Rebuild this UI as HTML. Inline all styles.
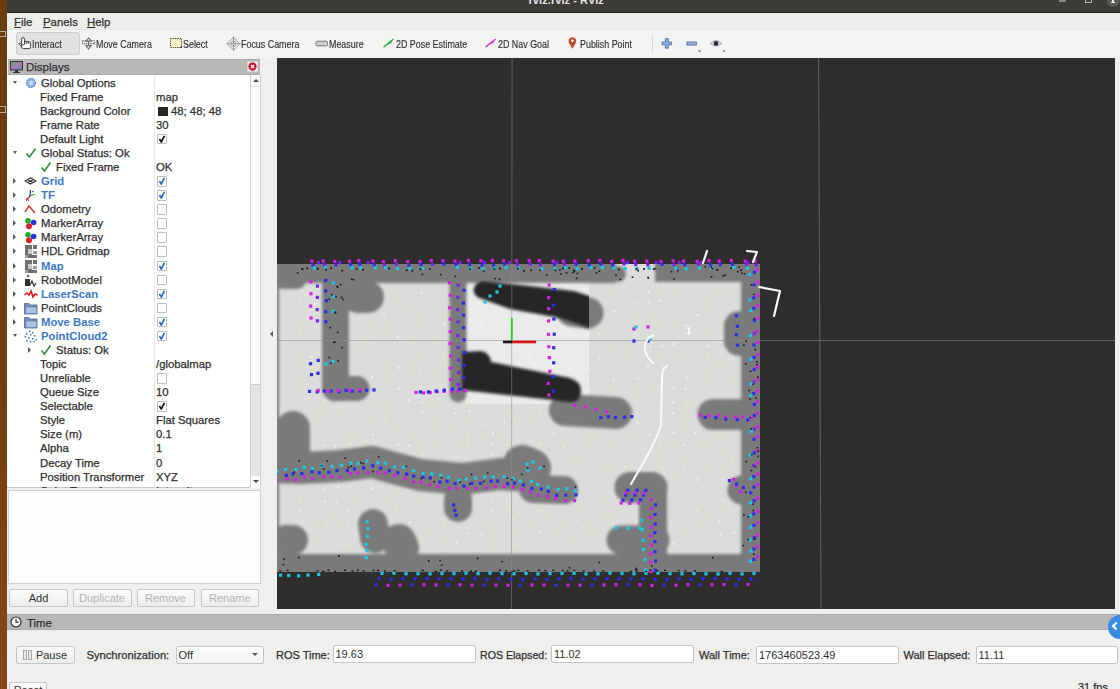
<!DOCTYPE html>
<html><head><meta charset="utf-8">
<style>
*{margin:0;padding:0;box-sizing:border-box}
html,body{width:1120px;height:689px;overflow:hidden;background:#efefee;font-family:"Liberation Sans",sans-serif;color:#303030}
.a{position:absolute}
.t{position:absolute;white-space:nowrap;font-size:11.3px;line-height:14px}
.lbl{-webkit-text-stroke:0.25px #2c2c2c}
.tb{position:absolute;white-space:nowrap;font-size:10.6px;line-height:12px;color:#303030;transform:scaleX(0.84);transform-origin:0 0;-webkit-text-stroke:0.15px #303030}
.cb{position:absolute;left:156.5px;width:10.5px;height:10.5px;border:1px solid #bdbdbd;background:#fff;border-radius:1px}
.cb.on::after{content:"";position:absolute;left:3.2px;top:0.5px;width:3px;height:6.5px;border:solid #2a2a2a;border-width:0 1.5px 1.5px 0;transform:rotate(38deg)}
.cb.bl.on::after{border-color:#3573c0}
.exp{position:absolute;width:0;height:0}
.exp.r{border-top:3px solid transparent;border-bottom:3px solid transparent;border-left:3.5px solid #5a5a5a}
.exp.d{border-left:2.9px solid transparent;border-right:2.9px solid transparent;border-top:3.2px solid #5a5a5a}
.blue{color:#3a78c3;font-weight:bold;-webkit-text-stroke:0}
.btn{position:absolute;border:1px solid #c6c6c6;border-radius:2px;background:linear-gradient(#fafafa,#eeeeee);font-size:11px;text-align:center;line-height:16px;white-space:nowrap}
.fld{position:absolute;border:1px solid #c4c4c4;border-radius:2px;background:#fff;font-size:11px;line-height:16px;padding-left:2px;white-space:nowrap}
</style></head><body>
<div class="a" style="left:0;top:0;width:7px;height:689px;background:linear-gradient(180deg,#6a3a10,#703c10 50%,#86481a)"></div>
<div class="a" style="left:0;top:31px;width:6px;height:6px;border:1.5px solid #cfc6bc;border-left:none;opacity:0.8"></div>
<div class="a" style="left:0;top:106px;width:6px;height:7px;border:1.5px solid #cfc6bc;border-left:none;opacity:0.8"></div>
<div class="a" style="left:7px;top:0;width:1113px;height:13px;background:#3c3b37"></div>
<div class="a" style="left:7px;top:11.5px;width:1113px;height:1.5px;background:#222"></div>
<div class="a" style="left:528.5px;top:-6.3px;font-size:11.2px;line-height:12px;font-weight:bold;color:#e6e6e6;white-space:nowrap">rviz.rviz - RViz</div>
<div class="a" style="left:1059px;top:0;width:6.5px;height:2px;background:#8a8886"></div>
<div class="a" style="left:1085px;top:-5px;width:6.5px;height:7.5px;border:1px solid #bdbbb8"></div>
<div class="a" style="left:1106.5px;top:-6px;width:13px;height:13px;border-radius:50%;background:#5c5a57"></div>
<div class="a" style="left:1110px;top:-1px;width:6px;height:3.5px;background:linear-gradient(60deg,transparent 42%,#eee 42%,#eee 58%,transparent 58%),linear-gradient(-60deg,transparent 42%,#eee 42%,#eee 58%,transparent 58%)"></div>
<div class="a" style="left:7px;top:13px;width:1113px;height:16px;background:#ededeb"></div>
<div class="t lbl" style="left:14px;top:14.5px;font-size:11.4px"><u>F</u>ile</div>
<div class="t lbl" style="left:43px;top:14.5px;font-size:11.4px"><u>P</u>anels</div>
<div class="t lbl" style="left:87px;top:14.5px;font-size:11.4px"><u>H</u>elp</div>
<div class="a" style="left:7px;top:29px;width:1113px;height:29px;background:#f3f3f1;border-top:1px solid #e4e4e2"></div>
<div class="a" style="left:16px;top:32px;width:64px;height:23px;background:#e2e2e1;border:1px solid #cdcdcd;border-radius:3px"></div>
<div class="tb" style="left:32px;top:37.5px">Interact</div>
<div class="tb" style="left:96px;top:37.5px">Move Camera</div>
<div class="tb" style="left:183px;top:37.5px">Select</div>
<div class="tb" style="left:241px;top:37.5px">Focus Camera</div>
<div class="tb" style="left:329px;top:37.5px">Measure</div>
<div class="tb" style="left:396px;top:37.5px">2D Pose Estimate</div>
<div class="tb" style="left:498px;top:37.5px">2D Nav Goal</div>
<div class="tb" style="left:580px;top:37.5px">Publish Point</div>
<div class="a" style="left:652px;top:34px;width:1px;height:19px;background:#d8d8d8"></div>
<svg class="a" style="left:0;top:29px" width="740" height="28" viewBox="0 29 740 28">
<g fill="#fff" stroke="#3a3a3a" stroke-width="0.95" stroke-linejoin="round"><path d="M22,47.2 L19.2,44.2 Q18.9,43 20.1,43 L22,44.4"/><rect x="21.6" y="41.6" width="9" height="7" rx="1.8"/><rect x="21.6" y="37.6" width="3" height="7.4" rx="1.5"/><path d="M24.6,42 V44 M26.8,41.8 V44 M28.8,42 V44" fill="none"/></g>
<g fill="none" stroke="#6a6a6a" stroke-width="1.1">
<path d="M88.5,38 L85.6,41.2 H91.4 Z"/>
<path d="M88.5,49 L85.8,45.6 H91.2 Z"/>
<path d="M82.5,40.8 H94.5 V43.6 H82.5 Z" stroke-dasharray="1.4 0.8"/>
<path d="M88.5,41 V46"/>
</g>
<rect x="170.5" y="38.5" width="11" height="9" fill="#f7f1c4" stroke="#444" stroke-width="1" stroke-dasharray="1.3 1"/>
<path d="M180,47.8 L182,45.8 L182,47.8 Z" fill="#111"/>
<g stroke="#999" stroke-width="1" fill="none">
<path d="M233.5,37.3 L240,43.7 L233.5,50.1 L227,43.7 Z"/>
<circle cx="233.5" cy="43.7" r="2.6"/>
<path d="M233.5,36.5 V51 M226.3,43.7 H240.7"/>
</g>
<rect x="316" y="41.2" width="11.5" height="4.6" rx="1" fill="#cfcfcf" stroke="#777" stroke-width="1"/>
<path d="M383.5,47.3 L393.5,39" stroke="#22aa33" stroke-width="1.3"/>
<path d="M386.5,45.5 L391,41.2 L392,42.4 Z" fill="#22aa33"/>
<path d="M485.5,47 L495.7,39" stroke="#dd22cc" stroke-width="1.3"/>
<path d="M488.5,45.3 L493.2,41.2 L494,42.4 Z" fill="#dd22cc"/>
<path d="M572.4,48.8 L569.2,43.4 Q568.5,42 568.6,41 Q569,37.3 572.4,37.3 Q575.8,37.3 576.2,41 Q576.3,42 575.6,43.4 Z" fill="#b5502a"/>
<circle cx="572.4" cy="40.8" r="1.2" fill="#fff"/>
<path d="M665.4,38.6 H668.2 V42 H671.6 V44.8 H668.2 V48.2 H665.4 V44.8 H662 V42 H665.4 Z" fill="#8eb0dc" stroke="#4a72aa" stroke-width="0.9"/>
<rect x="687" y="42" width="9.3" height="3" fill="#9ab6de" stroke="#4a68a0" stroke-width="0.9"/>
<path d="M698,50.4 H701 L699.5,52 Z" fill="#444"/>
<path d="M710,43.6 Q716,37.6 722,43.6 Q716,48.6 710,43.6 Z" fill="#d8d8de" stroke="#9a9aa6" stroke-width="0.8"/>
<circle cx="716" cy="43.4" r="2.3" fill="#2e2e3a"/>
<path d="M722.5,50.4 H725.5 L724,52 Z" fill="#444"/>
</svg>

<!-- Displays panel -->
<div class="a" style="left:8px;top:59px;width:252px;height:16px;background:#b9b8b8;border-top:1px solid #acacac;border-bottom:1px solid #acacac"></div>
<div class="t lbl" style="left:26px;top:60px;font-size:11.5px">Displays</div>
<div class="a" style="left:10px;top:61px;width:13px;height:12px;line-height:0"><svg width="13" height="12" viewBox="0 0 13 12"><defs><linearGradient id="dg" x1="0" y1="0" x2="1" y2="1"><stop offset="0" stop-color="#5fb35f"/><stop offset="0.5" stop-color="#b07ab0"/><stop offset="1" stop-color="#5a7fd0"/></linearGradient></defs><rect x="0.5" y="0.5" width="12" height="8.5" fill="url(#dg)" stroke="#333" stroke-width="1"/><rect x="5" y="9" width="3" height="2" fill="#333"/><rect x="3" y="11" width="7" height="1" fill="#333"/></svg></div>
<div class="a" style="left:247px;top:60.5px;width:11px;height:11px;background:#fff;border:1px solid #d8d8d8;border-radius:1px"></div>
<svg class="a" style="left:248px;top:61.5px" width="9" height="9" viewBox="0 0 9 9"><circle cx="4.5" cy="4.5" r="4.2" fill="#cc1a36"/><path d="M3,3 L6,6 M6,3 L3,6" stroke="#fff" stroke-width="1.2"/></svg>
<div class="a" style="left:7px;top:75px;width:254px;height:413px;background:#fff;border-right:1px solid #cfcfcf;border-bottom:1px solid #c8c8c8;overflow:hidden">
</div>
<div class="a" style="left:154px;top:75px;width:1px;height:413px;background:#e8e8e8"></div>
<div class="a" style="left:8px;top:75px;width:242px;height:413px;overflow:hidden">
<div class="a" style="left:-8px;top:-75px;width:260px;height:500px">
<div class="exp d" style="left:12.7px;top:81.1px"></div>
<div class="a" style="left:25px;top:76.6px;line-height:0"><svg width="12" height="12" viewBox="0 0 12 12"><circle cx="6" cy="6" r="4.6" fill="#8fb3e6" stroke="#5a88cf" stroke-width="1.2" stroke-dasharray="1.6 1.1"/><circle cx="6" cy="6" r="2.2" fill="#c9dcf5"/></svg></div>
<div class="t lbl" style="left:41px;top:75.6px">Global Options</div>
<div class="t lbl" style="left:40px;top:89.7px">Fixed Frame</div>
<div class="t lbl" style="left:156px;top:89.7px">map</div>
<div class="t lbl" style="left:40px;top:103.7px">Background Color</div>
<div class="a" style="left:158px;top:106.7px;width:10px;height:9px;background:#262626"></div>
<div class="t lbl" style="left:171px;top:103.7px">48; 48; 48</div>
<div class="t lbl" style="left:40px;top:117.8px">Frame Rate</div>
<div class="t lbl" style="left:156px;top:117.8px">30</div>
<div class="t lbl" style="left:40px;top:131.9px">Default Light</div>
<div class="cb" style="top:133.9px"><svg width="10" height="10" viewBox="0 0 10 10" style="position:absolute;left:-1px;top:-1px"><path d="M2.4,5 L4.3,8 L7.4,1.8" fill="none" stroke="#1a1a1a" stroke-width="1.7" stroke-linejoin="round"/></svg></div>
<div class="exp d" style="left:12.7px;top:151.4px"></div>
<div class="a" style="left:25px;top:146.9px;line-height:0"><svg width="12" height="12" viewBox="0 0 12 12"><path d="M1.5 6.5 L4.5 10 L10.5 1.5" fill="none" stroke="#2f8a3a" stroke-width="1.6"/></svg></div>
<div class="t lbl" style="left:41px;top:145.9px">Global Status: Ok</div>
<div class="a" style="left:40px;top:161.0px;line-height:0"><svg width="12" height="12" viewBox="0 0 12 12"><path d="M1.5 6.5 L4.5 10 L10.5 1.5" fill="none" stroke="#2f8a3a" stroke-width="1.6"/></svg></div>
<div class="t lbl" style="left:56px;top:160.0px">Fixed Frame</div>
<div class="t lbl" style="left:156px;top:160.0px">OK</div>
<div class="exp r" style="left:13.4px;top:178.1px"></div>
<div class="a" style="left:24px;top:175.1px;line-height:0"><svg width="13" height="12" viewBox="0 0 13 12"><path d="M1 6 L6.5 3 L12 6 L6.5 9 Z M3.5 4.6 L9 7.6 M9.5 4.6 L4 7.6" fill="none" stroke="#333" stroke-width="1.1"/></svg></div>
<div class="t lbl blue" style="left:41px;top:174.1px">Grid</div>
<div class="cb" style="top:176.1px"><svg width="10" height="10" viewBox="0 0 10 10" style="position:absolute;left:-1px;top:-1px"><path d="M2.4,5 L4.3,8 L7.4,1.8" fill="none" stroke="#2a6fbf" stroke-width="1.7" stroke-linejoin="round"/></svg></div>
<div class="exp r" style="left:13.4px;top:192.2px"></div>
<div class="a" style="left:24px;top:189.2px;line-height:0"><svg width="13" height="13" viewBox="0 0 13 13"><path d="M6 7 L2 11.5" stroke="#d22" stroke-width="1.3"/><path d="M6 7 L11 5" stroke="#3b3" stroke-width="1.3"/><path d="M6 7 L6.5 1" stroke="#33c" stroke-width="1.3"/><path d="M3 9 L5 12" stroke="#d22" stroke-width="1"/><path d="M8 3 L10 2" stroke="#33c" stroke-width="1"/></svg></div>
<div class="t lbl blue" style="left:41px;top:188.2px">TF</div>
<div class="cb" style="top:190.2px"><svg width="10" height="10" viewBox="0 0 10 10" style="position:absolute;left:-1px;top:-1px"><path d="M2.4,5 L4.3,8 L7.4,1.8" fill="none" stroke="#2a6fbf" stroke-width="1.7" stroke-linejoin="round"/></svg></div>
<div class="exp r" style="left:13.4px;top:206.2px"></div>
<div class="a" style="left:24px;top:203.2px;line-height:0"><svg width="13" height="12" viewBox="0 0 13 12"><path d="M1 9 L5 3 L11 10" fill="none" stroke="#d43a2a" stroke-width="1.4"/></svg></div>
<div class="t lbl" style="left:41px;top:202.2px">Odometry</div>
<div class="cb" style="top:204.2px"></div>
<div class="exp r" style="left:13.4px;top:220.3px"></div>
<div class="a" style="left:24px;top:217.3px;line-height:0"><svg width="13" height="13" viewBox="0 0 13 13"><circle cx="4" cy="3.8" r="2.8" fill="#22a822"/><circle cx="9.6" cy="5.5" r="2.8" fill="#2233d8"/><circle cx="5" cy="9.3" r="3" fill="#d8222a"/></svg></div>
<div class="t lbl" style="left:41px;top:216.3px">MarkerArray</div>
<div class="cb" style="top:218.3px"></div>
<div class="exp r" style="left:13.4px;top:234.4px"></div>
<div class="a" style="left:24px;top:231.4px;line-height:0"><svg width="13" height="13" viewBox="0 0 13 13"><circle cx="4" cy="3.8" r="2.8" fill="#22a822"/><circle cx="9.6" cy="5.5" r="2.8" fill="#2233d8"/><circle cx="5" cy="9.3" r="3" fill="#d8222a"/></svg></div>
<div class="t lbl" style="left:41px;top:230.4px">MarkerArray</div>
<div class="cb" style="top:232.4px"></div>
<div class="exp r" style="left:13.4px;top:248.4px"></div>
<div class="a" style="left:25px;top:245.4px;line-height:0"><svg width="12" height="13" viewBox="0 0 12 13"><rect x="0" y="0" width="7" height="13" fill="#707070"/><rect x="8" y="0" width="4" height="4" fill="#707070"/><rect x="3" y="4" width="4" height="5" fill="#c8c8c8"/><rect x="8" y="6" width="4" height="3" fill="#9a9a9a"/><rect x="5" y="10" width="7" height="3" fill="#707070"/><rect x="0" y="10" width="3" height="3" fill="#a0a0a0"/></svg></div>
<div class="t lbl" style="left:41px;top:244.4px">HDL Gridmap</div>
<div class="cb" style="top:246.4px"></div>
<div class="exp r" style="left:13.4px;top:262.5px"></div>
<div class="a" style="left:25px;top:259.5px;line-height:0"><svg width="12" height="13" viewBox="0 0 12 13"><rect x="0" y="0" width="7" height="13" fill="#707070"/><rect x="8" y="0" width="4" height="4" fill="#707070"/><rect x="3" y="4" width="4" height="5" fill="#c8c8c8"/><rect x="8" y="6" width="4" height="3" fill="#9a9a9a"/><rect x="5" y="10" width="7" height="3" fill="#707070"/><rect x="0" y="10" width="3" height="3" fill="#a0a0a0"/></svg></div>
<div class="t lbl blue" style="left:41px;top:258.5px">Map</div>
<div class="cb" style="top:260.5px"><svg width="10" height="10" viewBox="0 0 10 10" style="position:absolute;left:-1px;top:-1px"><path d="M2.4,5 L4.3,8 L7.4,1.8" fill="none" stroke="#2a6fbf" stroke-width="1.7" stroke-linejoin="round"/></svg></div>
<div class="exp r" style="left:13.4px;top:276.6px"></div>
<div class="a" style="left:24px;top:273.6px;line-height:0"><svg width="13" height="13" viewBox="0 0 13 13"><circle cx="4" cy="2" r="1.3" fill="#4a5a9a"/><rect x="1" y="5" width="5" height="7" fill="#333"/><path d="M6 11 L8 7 L10 12 L12 9" fill="none" stroke="#333" stroke-width="1.3"/></svg></div>
<div class="t lbl" style="left:41px;top:272.6px">RobotModel</div>
<div class="cb" style="top:274.6px"></div>
<div class="exp r" style="left:13.4px;top:290.6px"></div>
<div class="a" style="left:24px;top:287.6px;line-height:0"><svg width="14" height="12" viewBox="0 0 14 12"><path d="M0.5 7 L3 5 L5 7 L7 3 L9 9 L11 6 L13.5 7" fill="none" stroke="#e01818" stroke-width="1.6"/></svg></div>
<div class="t lbl blue" style="left:41px;top:286.6px">LaserScan</div>
<div class="cb" style="top:288.6px"><svg width="10" height="10" viewBox="0 0 10 10" style="position:absolute;left:-1px;top:-1px"><path d="M2.4,5 L4.3,8 L7.4,1.8" fill="none" stroke="#2a6fbf" stroke-width="1.7" stroke-linejoin="round"/></svg></div>
<div class="exp r" style="left:13.4px;top:304.7px"></div>
<div class="a" style="left:24px;top:301.7px;line-height:0"><svg width="14" height="13" viewBox="0 0 14 13"><path d="M0.5 1.5 H5 L6.5 3 H13 V12 H0.5 Z" fill="#6f8fb8" stroke="#4d6a92" stroke-width="0.8"/><rect x="1.8" y="5" width="11" height="6.5" fill="#a9c3e3" stroke="#5a7aa6" stroke-width="0.6"/></svg></div>
<div class="t lbl" style="left:41px;top:300.7px">PointClouds</div>
<div class="cb" style="top:302.7px"></div>
<div class="exp r" style="left:13.4px;top:318.8px"></div>
<div class="a" style="left:24px;top:315.8px;line-height:0"><svg width="14" height="13" viewBox="0 0 14 13"><path d="M0.5 1.5 H5 L6.5 3 H13 V12 H0.5 Z" fill="#6f8fb8" stroke="#4d6a92" stroke-width="0.8"/><rect x="1.8" y="5" width="11" height="6.5" fill="#a9c3e3" stroke="#5a7aa6" stroke-width="0.6"/></svg></div>
<div class="t lbl blue" style="left:41px;top:314.8px">Move Base</div>
<div class="cb" style="top:316.8px"><svg width="10" height="10" viewBox="0 0 10 10" style="position:absolute;left:-1px;top:-1px"><path d="M2.4,5 L4.3,8 L7.4,1.8" fill="none" stroke="#2a6fbf" stroke-width="1.7" stroke-linejoin="round"/></svg></div>
<div class="exp d" style="left:12.7px;top:334.4px"></div>
<div class="a" style="left:24px;top:329.9px;line-height:0"><svg width="14" height="13" viewBox="0 0 14 13"><g fill="#3c7fd0"><rect x="5" y="0.5" width="1.5" height="1.5"/><rect x="8" y="2" width="1.5" height="1.5"/><rect x="2" y="3" width="1.5" height="1.5"/><rect x="6" y="4" width="1.5" height="1.5"/><rect x="10" y="5" width="1.5" height="1.5"/><rect x="0.5" y="6" width="1.5" height="1.5"/><rect x="4" y="7" width="1.5" height="1.5"/><rect x="8" y="8" width="1.5" height="1.5"/><rect x="11.5" y="9" width="1.5" height="1.5"/><rect x="2" y="10" width="1.5" height="1.5"/><rect x="6" y="11" width="1.5" height="1.5"/><rect x="9.5" y="11" width="1.5" height="1.5"/></g></svg></div>
<div class="t lbl blue" style="left:41px;top:328.9px">PointCloud2</div>
<div class="cb" style="top:330.9px"><svg width="10" height="10" viewBox="0 0 10 10" style="position:absolute;left:-1px;top:-1px"><path d="M2.4,5 L4.3,8 L7.4,1.8" fill="none" stroke="#2a6fbf" stroke-width="1.7" stroke-linejoin="round"/></svg></div>
<div class="exp r" style="left:28.4px;top:346.9px"></div>
<div class="a" style="left:40px;top:343.9px;line-height:0"><svg width="12" height="12" viewBox="0 0 12 12"><path d="M1.5 6.5 L4.5 10 L10.5 1.5" fill="none" stroke="#2f8a3a" stroke-width="1.6"/></svg></div>
<div class="t lbl" style="left:56px;top:342.9px">Status: Ok</div>
<div class="t lbl" style="left:40px;top:357.0px">Topic</div>
<div class="t lbl" style="left:156px;top:357.0px">/globalmap</div>
<div class="t lbl" style="left:40px;top:371.1px">Unreliable</div>
<div class="cb" style="top:373.1px"></div>
<div class="t lbl" style="left:40px;top:385.1px">Queue Size</div>
<div class="t lbl" style="left:156px;top:385.1px">10</div>
<div class="t lbl" style="left:40px;top:399.2px">Selectable</div>
<div class="cb" style="top:401.2px"><svg width="10" height="10" viewBox="0 0 10 10" style="position:absolute;left:-1px;top:-1px"><path d="M2.4,5 L4.3,8 L7.4,1.8" fill="none" stroke="#1a1a1a" stroke-width="1.7" stroke-linejoin="round"/></svg></div>
<div class="t lbl" style="left:40px;top:413.3px">Style</div>
<div class="t lbl" style="left:156px;top:413.3px">Flat Squares</div>
<div class="t lbl" style="left:40px;top:427.4px">Size (m)</div>
<div class="t lbl" style="left:156px;top:427.4px">0.1</div>
<div class="t lbl" style="left:40px;top:441.4px">Alpha</div>
<div class="t lbl" style="left:156px;top:441.4px">1</div>
<div class="t lbl" style="left:40px;top:455.5px">Decay Time</div>
<div class="t lbl" style="left:156px;top:455.5px">0</div>
<div class="t lbl" style="left:40px;top:469.6px">Position Transformer</div>
<div class="t lbl" style="left:156px;top:469.6px">XYZ</div>
<div class="t lbl" style="left:40px;top:483.6px">Color Transformer</div>
<div class="t lbl" style="left:156px;top:483.6px">Intensity</div>
</div></div>
<!-- scrollbar -->
<div class="a" style="left:249.5px;top:75px;width:11px;height:413px;background:#fafafa;border-left:1px solid #cfcfcf;border-right:1px solid #cfcfcf"></div>
<div class="a" style="left:250.5px;top:384px;width:9px;height:92px;background:#e4e4e4;border-top:1px solid #cdcdcd"></div>
<div class="a" style="left:250.5px;top:86px;width:9px;height:1px;background:#d8d8d8"></div>
<div class="a" style="left:252.5px;top:78.5px;width:0;height:0;border-left:3px solid transparent;border-right:3px solid transparent;border-bottom:3.5px solid #444"></div>
<div class="a" style="left:252.5px;top:480px;width:0;height:0;border-left:3px solid transparent;border-right:3px solid transparent;border-top:3.5px solid #444"></div>
<!-- list empty area -->
<div class="a" style="left:8px;top:490px;width:253px;height:94px;background:#fefefe;border:1px solid #d0d0d0"></div>
<div class="btn" style="left:9px;top:589px;width:59px;height:18px">Add</div>
<div class="btn" style="left:72.5px;top:589px;width:59px;height:18px;color:#b4b4b4">Duplicate</div>
<div class="btn" style="left:136.5px;top:589px;width:58px;height:18px;color:#b4b4b4">Remove</div>
<div class="btn" style="left:200.5px;top:589px;width:58.5px;height:18px;color:#b4b4b4">Rename</div>
<!-- splitter arrow -->
<div class="a" style="left:269.5px;top:330.5px;width:0;height:0;border-top:3px solid transparent;border-bottom:3px solid transparent;border-right:3.5px solid #555"></div>
<!-- viewport -->
<div class="a" style="left:277px;top:58px;width:838px;height:551px;background:#302e2d;overflow:hidden">
<svg class="a" style="left:0;top:0" width="838" height="551" viewBox="277 58 838 551">
<defs><filter id="bl" x="-20%" y="-20%" width="140%" height="140%"><feGaussianBlur stdDeviation="1.5"/></filter><filter id="bl2" x="-20%" y="-20%" width="140%" height="140%"><feGaussianBlur stdDeviation="0.6"/></filter><clipPath id="mc"><rect x="250" y="264" width="510" height="308"/></clipPath><clipPath id="sq"><rect x="440" y="280.5" width="149" height="123.5"/></clipPath></defs>
<g clip-path="url(#mc)">
<rect x="250" y="264" width="510" height="308" fill="#dcdcdb"/>
<rect x="465" y="280.5" width="124" height="123.5" fill="#ebebeb"/>
<rect x="300.2" y="289.5" width="2.2" height="2.2" fill="#ffffff" fill-opacity="0.5"/><rect x="322.1" y="291.3" width="2.2" height="2.2" fill="#fbe8ee" fill-opacity="0.5"/><rect x="348.9" y="290.2" width="2.2" height="2.2" fill="#ffffff" fill-opacity="0.5"/><rect x="361.4" y="288.9" width="2.2" height="2.2" fill="#f8f4c8" fill-opacity="0.5"/><rect x="385.0" y="290.7" width="2.2" height="2.2" fill="#f4f0b8" fill-opacity="0.5"/><rect x="397.8" y="288.2" width="2.2" height="2.2" fill="#f4f0b8" fill-opacity="0.5"/><rect x="420.4" y="291.7" width="2.2" height="2.2" fill="#ffffff" fill-opacity="0.5"/><rect x="457.2" y="289.8" width="2.2" height="2.2" fill="#f8f4c8" fill-opacity="0.5"/><rect x="478.5" y="288.9" width="2.2" height="2.2" fill="#ffffff" fill-opacity="0.5"/><rect x="517.3" y="290.3" width="2.2" height="2.2" fill="#ffffff" fill-opacity="0.5"/><rect x="613.4" y="291.9" width="2.2" height="2.2" fill="#f4f0b8" fill-opacity="0.5"/><rect x="637.3" y="290.3" width="2.2" height="2.2" fill="#fbe8ee" fill-opacity="0.5"/><rect x="647.9" y="290.6" width="2.2" height="2.2" fill="#ffffff" fill-opacity="0.5"/><rect x="661.2" y="289.6" width="2.2" height="2.2" fill="#f8f4c8" fill-opacity="0.5"/><rect x="671.7" y="289.7" width="2.2" height="2.2" fill="#f4f0b8" fill-opacity="0.5"/><rect x="684.5" y="288.2" width="2.2" height="2.2" fill="#fbe8ee" fill-opacity="0.5"/><rect x="718.9" y="288.1" width="2.2" height="2.2" fill="#f4f0b8" fill-opacity="0.5"/><rect x="732.4" y="288.1" width="2.2" height="2.2" fill="#f8f4c8" fill-opacity="0.5"/><rect x="299.1" y="301.8" width="2.2" height="2.2" fill="#fbe8ee" fill-opacity="0.5"/><rect x="313.8" y="302.6" width="2.2" height="2.2" fill="#ffffff" fill-opacity="0.5"/><rect x="325.5" y="300.5" width="2.2" height="2.2" fill="#f4f0b8" fill-opacity="0.5"/><rect x="359.7" y="301.9" width="2.2" height="2.2" fill="#f8f4c8" fill-opacity="0.5"/><rect x="383.0" y="300.2" width="2.2" height="2.2" fill="#fbe8ee" fill-opacity="0.5"/><rect x="395.7" y="301.3" width="2.2" height="2.2" fill="#f4f0b8" fill-opacity="0.5"/><rect x="408.4" y="299.5" width="2.2" height="2.2" fill="#fbe8ee" fill-opacity="0.5"/><rect x="420.7" y="300.4" width="2.2" height="2.2" fill="#fbe8ee" fill-opacity="0.5"/><rect x="442.2" y="301.7" width="2.2" height="2.2" fill="#fbe8ee" fill-opacity="0.5"/><rect x="455.8" y="301.4" width="2.2" height="2.2" fill="#fbe8ee" fill-opacity="0.5"/><rect x="466.7" y="302.0" width="2.2" height="2.2" fill="#fbe8ee" fill-opacity="0.5"/><rect x="479.5" y="302.1" width="2.2" height="2.2" fill="#f4f0b8" fill-opacity="0.5"/><rect x="516.0" y="301.6" width="2.2" height="2.2" fill="#fbe8ee" fill-opacity="0.5"/><rect x="526.7" y="300.7" width="2.2" height="2.2" fill="#f4f0b8" fill-opacity="0.5"/><rect x="539.3" y="300.3" width="2.2" height="2.2" fill="#f8f4c8" fill-opacity="0.5"/><rect x="553.4" y="299.7" width="2.2" height="2.2" fill="#fbe8ee" fill-opacity="0.5"/><rect x="576.3" y="300.1" width="2.2" height="2.2" fill="#f4f0b8" fill-opacity="0.5"/><rect x="589.8" y="300.3" width="2.2" height="2.2" fill="#f8f4c8" fill-opacity="0.5"/><rect x="613.3" y="299.3" width="2.2" height="2.2" fill="#fbe8ee" fill-opacity="0.5"/><rect x="636.1" y="302.4" width="2.2" height="2.2" fill="#ffffff" fill-opacity="0.5"/><rect x="647.7" y="300.7" width="2.2" height="2.2" fill="#ffffff" fill-opacity="0.5"/><rect x="659.7" y="299.8" width="2.2" height="2.2" fill="#ffffff" fill-opacity="0.5"/><rect x="709.8" y="302.7" width="2.2" height="2.2" fill="#f8f4c8" fill-opacity="0.5"/><rect x="719.8" y="302.0" width="2.2" height="2.2" fill="#fbe8ee" fill-opacity="0.5"/><rect x="733.6" y="302.4" width="2.2" height="2.2" fill="#fbe8ee" fill-opacity="0.5"/><rect x="743.0" y="299.1" width="2.2" height="2.2" fill="#f8f4c8" fill-opacity="0.5"/><rect x="337.0" y="310.7" width="2.2" height="2.2" fill="#fbe8ee" fill-opacity="0.5"/><rect x="346.1" y="312.1" width="2.2" height="2.2" fill="#f4f0b8" fill-opacity="0.5"/><rect x="383.0" y="313.4" width="2.2" height="2.2" fill="#ffffff" fill-opacity="0.5"/><rect x="406.9" y="310.5" width="2.2" height="2.2" fill="#f4f0b8" fill-opacity="0.5"/><rect x="421.2" y="313.7" width="2.2" height="2.2" fill="#f8f4c8" fill-opacity="0.5"/><rect x="444.5" y="313.5" width="2.2" height="2.2" fill="#f4f0b8" fill-opacity="0.5"/><rect x="468.5" y="312.1" width="2.2" height="2.2" fill="#f4f0b8" fill-opacity="0.5"/><rect x="481.1" y="310.0" width="2.2" height="2.2" fill="#f4f0b8" fill-opacity="0.5"/><rect x="502.2" y="311.9" width="2.2" height="2.2" fill="#f4f0b8" fill-opacity="0.5"/><rect x="528.0" y="311.3" width="2.2" height="2.2" fill="#fbe8ee" fill-opacity="0.5"/><rect x="539.5" y="311.6" width="2.2" height="2.2" fill="#fbe8ee" fill-opacity="0.5"/><rect x="550.8" y="311.3" width="2.2" height="2.2" fill="#f4f0b8" fill-opacity="0.5"/><rect x="562.0" y="312.9" width="2.2" height="2.2" fill="#f4f0b8" fill-opacity="0.5"/><rect x="587.8" y="312.6" width="2.2" height="2.2" fill="#ffffff" fill-opacity="0.5"/><rect x="613.5" y="310.2" width="2.2" height="2.2" fill="#ffffff" fill-opacity="0.5"/><rect x="637.8" y="311.7" width="2.2" height="2.2" fill="#f4f0b8" fill-opacity="0.5"/><rect x="648.1" y="312.8" width="2.2" height="2.2" fill="#f4f0b8" fill-opacity="0.5"/><rect x="670.5" y="310.1" width="2.2" height="2.2" fill="#fbe8ee" fill-opacity="0.5"/><rect x="685.6" y="313.2" width="2.2" height="2.2" fill="#fbe8ee" fill-opacity="0.5"/><rect x="696.8" y="313.8" width="2.2" height="2.2" fill="#ffffff" fill-opacity="0.5"/><rect x="744.4" y="310.0" width="2.2" height="2.2" fill="#f8f4c8" fill-opacity="0.5"/><rect x="299.6" y="323.1" width="2.2" height="2.2" fill="#f4f0b8" fill-opacity="0.5"/><rect x="325.3" y="322.4" width="2.2" height="2.2" fill="#f4f0b8" fill-opacity="0.5"/><rect x="334.5" y="322.9" width="2.2" height="2.2" fill="#fbe8ee" fill-opacity="0.5"/><rect x="373.1" y="323.0" width="2.2" height="2.2" fill="#f8f4c8" fill-opacity="0.5"/><rect x="385.0" y="324.7" width="2.2" height="2.2" fill="#f4f0b8" fill-opacity="0.5"/><rect x="418.3" y="325.0" width="2.2" height="2.2" fill="#f8f4c8" fill-opacity="0.5"/><rect x="432.8" y="324.8" width="2.2" height="2.2" fill="#fbe8ee" fill-opacity="0.5"/><rect x="443.6" y="322.4" width="2.2" height="2.2" fill="#ffffff" fill-opacity="0.5"/><rect x="466.9" y="324.7" width="2.2" height="2.2" fill="#f8f4c8" fill-opacity="0.5"/><rect x="480.3" y="323.3" width="2.2" height="2.2" fill="#ffffff" fill-opacity="0.5"/><rect x="491.6" y="324.6" width="2.2" height="2.2" fill="#f8f4c8" fill-opacity="0.5"/><rect x="505.0" y="324.7" width="2.2" height="2.2" fill="#ffffff" fill-opacity="0.5"/><rect x="541.0" y="321.6" width="2.2" height="2.2" fill="#fbe8ee" fill-opacity="0.5"/><rect x="577.1" y="323.7" width="2.2" height="2.2" fill="#ffffff" fill-opacity="0.5"/><rect x="635.1" y="324.2" width="2.2" height="2.2" fill="#f8f4c8" fill-opacity="0.5"/><rect x="647.4" y="322.3" width="2.2" height="2.2" fill="#f8f4c8" fill-opacity="0.5"/><rect x="660.8" y="323.8" width="2.2" height="2.2" fill="#f8f4c8" fill-opacity="0.5"/><rect x="673.3" y="324.3" width="2.2" height="2.2" fill="#f4f0b8" fill-opacity="0.5"/><rect x="684.9" y="324.4" width="2.2" height="2.2" fill="#ffffff" fill-opacity="0.5"/><rect x="721.6" y="324.6" width="2.2" height="2.2" fill="#f4f0b8" fill-opacity="0.5"/><rect x="298.8" y="333.0" width="2.2" height="2.2" fill="#f8f4c8" fill-opacity="0.5"/><rect x="337.7" y="332.7" width="2.2" height="2.2" fill="#f4f0b8" fill-opacity="0.5"/><rect x="347.7" y="334.9" width="2.2" height="2.2" fill="#f4f0b8" fill-opacity="0.5"/><rect x="359.1" y="335.7" width="2.2" height="2.2" fill="#f4f0b8" fill-opacity="0.5"/><rect x="372.3" y="334.7" width="2.2" height="2.2" fill="#f4f0b8" fill-opacity="0.5"/><rect x="383.3" y="333.5" width="2.2" height="2.2" fill="#f4f0b8" fill-opacity="0.5"/><rect x="396.3" y="335.8" width="2.2" height="2.2" fill="#ffffff" fill-opacity="0.5"/><rect x="407.3" y="335.5" width="2.2" height="2.2" fill="#f4f0b8" fill-opacity="0.5"/><rect x="433.5" y="335.6" width="2.2" height="2.2" fill="#f4f0b8" fill-opacity="0.5"/><rect x="444.8" y="334.7" width="2.2" height="2.2" fill="#fbe8ee" fill-opacity="0.5"/><rect x="468.7" y="334.6" width="2.2" height="2.2" fill="#fbe8ee" fill-opacity="0.5"/><rect x="481.8" y="333.4" width="2.2" height="2.2" fill="#f4f0b8" fill-opacity="0.5"/><rect x="502.2" y="333.2" width="2.2" height="2.2" fill="#f8f4c8" fill-opacity="0.5"/><rect x="539.5" y="335.7" width="2.2" height="2.2" fill="#ffffff" fill-opacity="0.5"/><rect x="553.7" y="332.6" width="2.2" height="2.2" fill="#fbe8ee" fill-opacity="0.5"/><rect x="587.2" y="332.7" width="2.2" height="2.2" fill="#ffffff" fill-opacity="0.5"/><rect x="598.7" y="332.3" width="2.2" height="2.2" fill="#f8f4c8" fill-opacity="0.5"/><rect x="625.0" y="333.4" width="2.2" height="2.2" fill="#fbe8ee" fill-opacity="0.5"/><rect x="634.2" y="332.5" width="2.2" height="2.2" fill="#ffffff" fill-opacity="0.5"/><rect x="647.0" y="335.1" width="2.2" height="2.2" fill="#fbe8ee" fill-opacity="0.5"/><rect x="685.2" y="332.3" width="2.2" height="2.2" fill="#ffffff" fill-opacity="0.5"/><rect x="707.1" y="332.4" width="2.2" height="2.2" fill="#f4f0b8" fill-opacity="0.5"/><rect x="744.8" y="334.3" width="2.2" height="2.2" fill="#ffffff" fill-opacity="0.5"/><rect x="335.6" y="343.8" width="2.2" height="2.2" fill="#f8f4c8" fill-opacity="0.5"/><rect x="359.0" y="346.1" width="2.2" height="2.2" fill="#f4f0b8" fill-opacity="0.5"/><rect x="383.6" y="346.3" width="2.2" height="2.2" fill="#fbe8ee" fill-opacity="0.5"/><rect x="457.4" y="344.9" width="2.2" height="2.2" fill="#f8f4c8" fill-opacity="0.5"/><rect x="481.1" y="345.6" width="2.2" height="2.2" fill="#ffffff" fill-opacity="0.5"/><rect x="492.5" y="343.8" width="2.2" height="2.2" fill="#f8f4c8" fill-opacity="0.5"/><rect x="504.0" y="345.6" width="2.2" height="2.2" fill="#ffffff" fill-opacity="0.5"/><rect x="515.1" y="345.6" width="2.2" height="2.2" fill="#f8f4c8" fill-opacity="0.5"/><rect x="529.2" y="345.5" width="2.2" height="2.2" fill="#f4f0b8" fill-opacity="0.5"/><rect x="540.5" y="345.0" width="2.2" height="2.2" fill="#ffffff" fill-opacity="0.5"/><rect x="553.7" y="344.3" width="2.2" height="2.2" fill="#fbe8ee" fill-opacity="0.5"/><rect x="577.4" y="345.4" width="2.2" height="2.2" fill="#f4f0b8" fill-opacity="0.5"/><rect x="613.2" y="346.7" width="2.2" height="2.2" fill="#f8f4c8" fill-opacity="0.5"/><rect x="625.0" y="344.9" width="2.2" height="2.2" fill="#f4f0b8" fill-opacity="0.5"/><rect x="649.4" y="345.8" width="2.2" height="2.2" fill="#ffffff" fill-opacity="0.5"/><rect x="660.8" y="345.1" width="2.2" height="2.2" fill="#ffffff" fill-opacity="0.5"/><rect x="672.0" y="343.1" width="2.2" height="2.2" fill="#ffffff" fill-opacity="0.5"/><rect x="694.7" y="346.6" width="2.2" height="2.2" fill="#fbe8ee" fill-opacity="0.5"/><rect x="707.5" y="345.1" width="2.2" height="2.2" fill="#ffffff" fill-opacity="0.5"/><rect x="718.0" y="343.8" width="2.2" height="2.2" fill="#fbe8ee" fill-opacity="0.5"/><rect x="731.8" y="343.8" width="2.2" height="2.2" fill="#f8f4c8" fill-opacity="0.5"/><rect x="744.3" y="345.0" width="2.2" height="2.2" fill="#f4f0b8" fill-opacity="0.5"/><rect x="300.4" y="355.8" width="2.2" height="2.2" fill="#f8f4c8" fill-opacity="0.5"/><rect x="310.1" y="355.8" width="2.2" height="2.2" fill="#ffffff" fill-opacity="0.5"/><rect x="324.9" y="355.0" width="2.2" height="2.2" fill="#f4f0b8" fill-opacity="0.5"/><rect x="334.1" y="357.9" width="2.2" height="2.2" fill="#f8f4c8" fill-opacity="0.5"/><rect x="347.6" y="354.8" width="2.2" height="2.2" fill="#fbe8ee" fill-opacity="0.5"/><rect x="370.5" y="354.2" width="2.2" height="2.2" fill="#fbe8ee" fill-opacity="0.5"/><rect x="385.2" y="355.9" width="2.2" height="2.2" fill="#fbe8ee" fill-opacity="0.5"/><rect x="396.2" y="354.1" width="2.2" height="2.2" fill="#fbe8ee" fill-opacity="0.5"/><rect x="418.4" y="356.7" width="2.2" height="2.2" fill="#f4f0b8" fill-opacity="0.5"/><rect x="442.1" y="354.4" width="2.2" height="2.2" fill="#f8f4c8" fill-opacity="0.5"/><rect x="455.9" y="354.8" width="2.2" height="2.2" fill="#fbe8ee" fill-opacity="0.5"/><rect x="469.9" y="355.9" width="2.2" height="2.2" fill="#ffffff" fill-opacity="0.5"/><rect x="503.2" y="356.4" width="2.2" height="2.2" fill="#ffffff" fill-opacity="0.5"/><rect x="515.2" y="357.4" width="2.2" height="2.2" fill="#f4f0b8" fill-opacity="0.5"/><rect x="528.2" y="356.1" width="2.2" height="2.2" fill="#ffffff" fill-opacity="0.5"/><rect x="541.0" y="356.9" width="2.2" height="2.2" fill="#fbe8ee" fill-opacity="0.5"/><rect x="563.7" y="354.9" width="2.2" height="2.2" fill="#ffffff" fill-opacity="0.5"/><rect x="577.3" y="356.0" width="2.2" height="2.2" fill="#ffffff" fill-opacity="0.5"/><rect x="598.7" y="357.0" width="2.2" height="2.2" fill="#ffffff" fill-opacity="0.5"/><rect x="612.8" y="356.6" width="2.2" height="2.2" fill="#fbe8ee" fill-opacity="0.5"/><rect x="625.4" y="356.6" width="2.2" height="2.2" fill="#f4f0b8" fill-opacity="0.5"/><rect x="637.6" y="356.9" width="2.2" height="2.2" fill="#fbe8ee" fill-opacity="0.5"/><rect x="658.8" y="357.1" width="2.2" height="2.2" fill="#f4f0b8" fill-opacity="0.5"/><rect x="671.2" y="355.8" width="2.2" height="2.2" fill="#f8f4c8" fill-opacity="0.5"/><rect x="682.2" y="354.6" width="2.2" height="2.2" fill="#f8f4c8" fill-opacity="0.5"/><rect x="706.9" y="357.9" width="2.2" height="2.2" fill="#f8f4c8" fill-opacity="0.5"/><rect x="732.0" y="357.6" width="2.2" height="2.2" fill="#fbe8ee" fill-opacity="0.5"/><rect x="298.8" y="365.7" width="2.2" height="2.2" fill="#f4f0b8" fill-opacity="0.5"/><rect x="313.2" y="367.4" width="2.2" height="2.2" fill="#f4f0b8" fill-opacity="0.5"/><rect x="325.6" y="365.3" width="2.2" height="2.2" fill="#ffffff" fill-opacity="0.5"/><rect x="337.3" y="367.7" width="2.2" height="2.2" fill="#f4f0b8" fill-opacity="0.5"/><rect x="384.4" y="366.8" width="2.2" height="2.2" fill="#f4f0b8" fill-opacity="0.5"/><rect x="397.8" y="366.8" width="2.2" height="2.2" fill="#ffffff" fill-opacity="0.5"/><rect x="408.2" y="366.9" width="2.2" height="2.2" fill="#f4f0b8" fill-opacity="0.5"/><rect x="418.8" y="368.0" width="2.2" height="2.2" fill="#fbe8ee" fill-opacity="0.5"/><rect x="432.6" y="367.4" width="2.2" height="2.2" fill="#f8f4c8" fill-opacity="0.5"/><rect x="445.4" y="365.2" width="2.2" height="2.2" fill="#f8f4c8" fill-opacity="0.5"/><rect x="454.3" y="365.9" width="2.2" height="2.2" fill="#f8f4c8" fill-opacity="0.5"/><rect x="478.9" y="368.5" width="2.2" height="2.2" fill="#ffffff" fill-opacity="0.5"/><rect x="503.7" y="368.8" width="2.2" height="2.2" fill="#ffffff" fill-opacity="0.5"/><rect x="517.1" y="366.6" width="2.2" height="2.2" fill="#f4f0b8" fill-opacity="0.5"/><rect x="529.7" y="365.7" width="2.2" height="2.2" fill="#f4f0b8" fill-opacity="0.5"/><rect x="538.6" y="367.0" width="2.2" height="2.2" fill="#f4f0b8" fill-opacity="0.5"/><rect x="565.0" y="366.1" width="2.2" height="2.2" fill="#ffffff" fill-opacity="0.5"/><rect x="575.9" y="365.8" width="2.2" height="2.2" fill="#fbe8ee" fill-opacity="0.5"/><rect x="587.8" y="368.6" width="2.2" height="2.2" fill="#ffffff" fill-opacity="0.5"/><rect x="598.6" y="368.1" width="2.2" height="2.2" fill="#fbe8ee" fill-opacity="0.5"/><rect x="646.6" y="366.2" width="2.2" height="2.2" fill="#ffffff" fill-opacity="0.5"/><rect x="662.0" y="365.9" width="2.2" height="2.2" fill="#fbe8ee" fill-opacity="0.5"/><rect x="671.9" y="368.5" width="2.2" height="2.2" fill="#fbe8ee" fill-opacity="0.5"/><rect x="706.1" y="367.5" width="2.2" height="2.2" fill="#f8f4c8" fill-opacity="0.5"/><rect x="718.7" y="365.2" width="2.2" height="2.2" fill="#f8f4c8" fill-opacity="0.5"/><rect x="301.9" y="377.5" width="2.2" height="2.2" fill="#f4f0b8" fill-opacity="0.5"/><rect x="311.0" y="377.1" width="2.2" height="2.2" fill="#fbe8ee" fill-opacity="0.5"/><rect x="359.0" y="378.7" width="2.2" height="2.2" fill="#ffffff" fill-opacity="0.5"/><rect x="371.0" y="376.2" width="2.2" height="2.2" fill="#ffffff" fill-opacity="0.5"/><rect x="386.0" y="376.7" width="2.2" height="2.2" fill="#f8f4c8" fill-opacity="0.5"/><rect x="433.0" y="377.3" width="2.2" height="2.2" fill="#f8f4c8" fill-opacity="0.5"/><rect x="442.7" y="376.1" width="2.2" height="2.2" fill="#f4f0b8" fill-opacity="0.5"/><rect x="480.7" y="379.7" width="2.2" height="2.2" fill="#ffffff" fill-opacity="0.5"/><rect x="492.5" y="377.2" width="2.2" height="2.2" fill="#f4f0b8" fill-opacity="0.5"/><rect x="527.6" y="377.4" width="2.2" height="2.2" fill="#ffffff" fill-opacity="0.5"/><rect x="539.0" y="377.1" width="2.2" height="2.2" fill="#f8f4c8" fill-opacity="0.5"/><rect x="562.2" y="377.9" width="2.2" height="2.2" fill="#f8f4c8" fill-opacity="0.5"/><rect x="612.3" y="378.2" width="2.2" height="2.2" fill="#ffffff" fill-opacity="0.5"/><rect x="625.1" y="379.0" width="2.2" height="2.2" fill="#fbe8ee" fill-opacity="0.5"/><rect x="636.7" y="377.5" width="2.2" height="2.2" fill="#ffffff" fill-opacity="0.5"/><rect x="685.7" y="376.7" width="2.2" height="2.2" fill="#ffffff" fill-opacity="0.5"/><rect x="706.2" y="376.9" width="2.2" height="2.2" fill="#f4f0b8" fill-opacity="0.5"/><rect x="731.6" y="377.1" width="2.2" height="2.2" fill="#f8f4c8" fill-opacity="0.5"/><rect x="743.7" y="379.6" width="2.2" height="2.2" fill="#ffffff" fill-opacity="0.5"/><rect x="298.8" y="387.3" width="2.2" height="2.2" fill="#f4f0b8" fill-opacity="0.5"/><rect x="359.1" y="390.8" width="2.2" height="2.2" fill="#f4f0b8" fill-opacity="0.5"/><rect x="373.9" y="388.8" width="2.2" height="2.2" fill="#fbe8ee" fill-opacity="0.5"/><rect x="382.2" y="387.9" width="2.2" height="2.2" fill="#f8f4c8" fill-opacity="0.5"/><rect x="397.6" y="387.7" width="2.2" height="2.2" fill="#ffffff" fill-opacity="0.5"/><rect x="430.2" y="390.0" width="2.2" height="2.2" fill="#f8f4c8" fill-opacity="0.5"/><rect x="444.6" y="387.5" width="2.2" height="2.2" fill="#f8f4c8" fill-opacity="0.5"/><rect x="457.8" y="389.1" width="2.2" height="2.2" fill="#ffffff" fill-opacity="0.5"/><rect x="478.7" y="387.1" width="2.2" height="2.2" fill="#f4f0b8" fill-opacity="0.5"/><rect x="490.6" y="387.5" width="2.2" height="2.2" fill="#fbe8ee" fill-opacity="0.5"/><rect x="539.5" y="387.6" width="2.2" height="2.2" fill="#ffffff" fill-opacity="0.5"/><rect x="551.4" y="390.8" width="2.2" height="2.2" fill="#ffffff" fill-opacity="0.5"/><rect x="565.4" y="388.9" width="2.2" height="2.2" fill="#fbe8ee" fill-opacity="0.5"/><rect x="577.4" y="388.8" width="2.2" height="2.2" fill="#ffffff" fill-opacity="0.5"/><rect x="588.2" y="388.8" width="2.2" height="2.2" fill="#ffffff" fill-opacity="0.5"/><rect x="612.4" y="390.7" width="2.2" height="2.2" fill="#f8f4c8" fill-opacity="0.5"/><rect x="625.4" y="390.8" width="2.2" height="2.2" fill="#fbe8ee" fill-opacity="0.5"/><rect x="634.8" y="387.2" width="2.2" height="2.2" fill="#f4f0b8" fill-opacity="0.5"/><rect x="649.5" y="387.5" width="2.2" height="2.2" fill="#f4f0b8" fill-opacity="0.5"/><rect x="658.5" y="388.6" width="2.2" height="2.2" fill="#fbe8ee" fill-opacity="0.5"/><rect x="673.1" y="387.4" width="2.2" height="2.2" fill="#ffffff" fill-opacity="0.5"/><rect x="684.4" y="387.9" width="2.2" height="2.2" fill="#ffffff" fill-opacity="0.5"/><rect x="695.5" y="388.3" width="2.2" height="2.2" fill="#fbe8ee" fill-opacity="0.5"/><rect x="744.8" y="388.4" width="2.2" height="2.2" fill="#fbe8ee" fill-opacity="0.5"/><rect x="298.5" y="400.0" width="2.2" height="2.2" fill="#fbe8ee" fill-opacity="0.5"/><rect x="323.7" y="399.1" width="2.2" height="2.2" fill="#f8f4c8" fill-opacity="0.5"/><rect x="336.1" y="401.5" width="2.2" height="2.2" fill="#ffffff" fill-opacity="0.5"/><rect x="359.7" y="400.2" width="2.2" height="2.2" fill="#fbe8ee" fill-opacity="0.5"/><rect x="373.4" y="399.5" width="2.2" height="2.2" fill="#f4f0b8" fill-opacity="0.5"/><rect x="382.9" y="400.2" width="2.2" height="2.2" fill="#f4f0b8" fill-opacity="0.5"/><rect x="397.5" y="400.8" width="2.2" height="2.2" fill="#fbe8ee" fill-opacity="0.5"/><rect x="407.5" y="399.5" width="2.2" height="2.2" fill="#ffffff" fill-opacity="0.5"/><rect x="420.6" y="401.5" width="2.2" height="2.2" fill="#ffffff" fill-opacity="0.5"/><rect x="430.9" y="399.5" width="2.2" height="2.2" fill="#f4f0b8" fill-opacity="0.5"/><rect x="442.3" y="399.3" width="2.2" height="2.2" fill="#fbe8ee" fill-opacity="0.5"/><rect x="454.1" y="400.9" width="2.2" height="2.2" fill="#fbe8ee" fill-opacity="0.5"/><rect x="468.9" y="401.3" width="2.2" height="2.2" fill="#f8f4c8" fill-opacity="0.5"/><rect x="480.7" y="398.5" width="2.2" height="2.2" fill="#ffffff" fill-opacity="0.5"/><rect x="490.6" y="399.2" width="2.2" height="2.2" fill="#f8f4c8" fill-opacity="0.5"/><rect x="502.7" y="401.5" width="2.2" height="2.2" fill="#ffffff" fill-opacity="0.5"/><rect x="515.4" y="398.0" width="2.2" height="2.2" fill="#f8f4c8" fill-opacity="0.5"/><rect x="526.6" y="398.8" width="2.2" height="2.2" fill="#ffffff" fill-opacity="0.5"/><rect x="563.1" y="400.6" width="2.2" height="2.2" fill="#f4f0b8" fill-opacity="0.5"/><rect x="577.5" y="401.0" width="2.2" height="2.2" fill="#fbe8ee" fill-opacity="0.5"/><rect x="586.0" y="399.9" width="2.2" height="2.2" fill="#ffffff" fill-opacity="0.5"/><rect x="612.6" y="400.6" width="2.2" height="2.2" fill="#f8f4c8" fill-opacity="0.5"/><rect x="635.6" y="398.4" width="2.2" height="2.2" fill="#f4f0b8" fill-opacity="0.5"/><rect x="659.0" y="401.3" width="2.2" height="2.2" fill="#f8f4c8" fill-opacity="0.5"/><rect x="671.9" y="401.4" width="2.2" height="2.2" fill="#ffffff" fill-opacity="0.5"/><rect x="685.9" y="400.6" width="2.2" height="2.2" fill="#f8f4c8" fill-opacity="0.5"/><rect x="695.2" y="401.6" width="2.2" height="2.2" fill="#f8f4c8" fill-opacity="0.5"/><rect x="720.1" y="399.3" width="2.2" height="2.2" fill="#f8f4c8" fill-opacity="0.5"/><rect x="732.9" y="401.4" width="2.2" height="2.2" fill="#f8f4c8" fill-opacity="0.5"/><rect x="745.4" y="398.7" width="2.2" height="2.2" fill="#f4f0b8" fill-opacity="0.5"/><rect x="313.7" y="410.6" width="2.2" height="2.2" fill="#f8f4c8" fill-opacity="0.5"/><rect x="325.0" y="410.3" width="2.2" height="2.2" fill="#f8f4c8" fill-opacity="0.5"/><rect x="337.4" y="412.3" width="2.2" height="2.2" fill="#f4f0b8" fill-opacity="0.5"/><rect x="347.5" y="409.9" width="2.2" height="2.2" fill="#fbe8ee" fill-opacity="0.5"/><rect x="359.1" y="411.8" width="2.2" height="2.2" fill="#fbe8ee" fill-opacity="0.5"/><rect x="383.2" y="409.7" width="2.2" height="2.2" fill="#f8f4c8" fill-opacity="0.5"/><rect x="396.8" y="409.9" width="2.2" height="2.2" fill="#fbe8ee" fill-opacity="0.5"/><rect x="421.0" y="410.6" width="2.2" height="2.2" fill="#ffffff" fill-opacity="0.5"/><rect x="454.2" y="412.1" width="2.2" height="2.2" fill="#ffffff" fill-opacity="0.5"/><rect x="468.3" y="410.1" width="2.2" height="2.2" fill="#ffffff" fill-opacity="0.5"/><rect x="493.3" y="412.9" width="2.2" height="2.2" fill="#fbe8ee" fill-opacity="0.5"/><rect x="504.5" y="412.0" width="2.2" height="2.2" fill="#f4f0b8" fill-opacity="0.5"/><rect x="528.9" y="411.3" width="2.2" height="2.2" fill="#f4f0b8" fill-opacity="0.5"/><rect x="538.6" y="410.2" width="2.2" height="2.2" fill="#f8f4c8" fill-opacity="0.5"/><rect x="564.0" y="411.3" width="2.2" height="2.2" fill="#f8f4c8" fill-opacity="0.5"/><rect x="647.3" y="410.6" width="2.2" height="2.2" fill="#fbe8ee" fill-opacity="0.5"/><rect x="672.2" y="412.1" width="2.2" height="2.2" fill="#ffffff" fill-opacity="0.5"/><rect x="684.3" y="410.0" width="2.2" height="2.2" fill="#f8f4c8" fill-opacity="0.5"/><rect x="706.4" y="411.2" width="2.2" height="2.2" fill="#fbe8ee" fill-opacity="0.5"/><rect x="732.2" y="410.9" width="2.2" height="2.2" fill="#ffffff" fill-opacity="0.5"/><rect x="300.9" y="422.4" width="2.2" height="2.2" fill="#f8f4c8" fill-opacity="0.5"/><rect x="312.7" y="420.5" width="2.2" height="2.2" fill="#f4f0b8" fill-opacity="0.5"/><rect x="347.6" y="420.3" width="2.2" height="2.2" fill="#fbe8ee" fill-opacity="0.5"/><rect x="371.0" y="420.8" width="2.2" height="2.2" fill="#f4f0b8" fill-opacity="0.5"/><rect x="383.7" y="421.0" width="2.2" height="2.2" fill="#f8f4c8" fill-opacity="0.5"/><rect x="397.1" y="423.8" width="2.2" height="2.2" fill="#f8f4c8" fill-opacity="0.5"/><rect x="407.0" y="421.4" width="2.2" height="2.2" fill="#fbe8ee" fill-opacity="0.5"/><rect x="432.8" y="423.0" width="2.2" height="2.2" fill="#f8f4c8" fill-opacity="0.5"/><rect x="454.5" y="423.3" width="2.2" height="2.2" fill="#f8f4c8" fill-opacity="0.5"/><rect x="468.7" y="421.1" width="2.2" height="2.2" fill="#f8f4c8" fill-opacity="0.5"/><rect x="481.5" y="423.0" width="2.2" height="2.2" fill="#ffffff" fill-opacity="0.5"/><rect x="503.2" y="421.1" width="2.2" height="2.2" fill="#ffffff" fill-opacity="0.5"/><rect x="514.1" y="421.7" width="2.2" height="2.2" fill="#f4f0b8" fill-opacity="0.5"/><rect x="529.0" y="422.0" width="2.2" height="2.2" fill="#f8f4c8" fill-opacity="0.5"/><rect x="562.2" y="422.2" width="2.2" height="2.2" fill="#fbe8ee" fill-opacity="0.5"/><rect x="574.6" y="423.9" width="2.2" height="2.2" fill="#f4f0b8" fill-opacity="0.5"/><rect x="589.0" y="420.6" width="2.2" height="2.2" fill="#fbe8ee" fill-opacity="0.5"/><rect x="622.5" y="422.5" width="2.2" height="2.2" fill="#f8f4c8" fill-opacity="0.5"/><rect x="636.8" y="422.5" width="2.2" height="2.2" fill="#ffffff" fill-opacity="0.5"/><rect x="682.7" y="423.3" width="2.2" height="2.2" fill="#f4f0b8" fill-opacity="0.5"/><rect x="696.8" y="420.7" width="2.2" height="2.2" fill="#f4f0b8" fill-opacity="0.5"/><rect x="708.9" y="423.3" width="2.2" height="2.2" fill="#fbe8ee" fill-opacity="0.5"/><rect x="721.2" y="421.6" width="2.2" height="2.2" fill="#ffffff" fill-opacity="0.5"/><rect x="310.9" y="431.0" width="2.2" height="2.2" fill="#f8f4c8" fill-opacity="0.5"/><rect x="323.7" y="431.4" width="2.2" height="2.2" fill="#fbe8ee" fill-opacity="0.5"/><rect x="348.7" y="432.0" width="2.2" height="2.2" fill="#f4f0b8" fill-opacity="0.5"/><rect x="358.1" y="432.4" width="2.2" height="2.2" fill="#f8f4c8" fill-opacity="0.5"/><rect x="372.0" y="433.6" width="2.2" height="2.2" fill="#ffffff" fill-opacity="0.5"/><rect x="407.7" y="432.2" width="2.2" height="2.2" fill="#f4f0b8" fill-opacity="0.5"/><rect x="419.8" y="433.1" width="2.2" height="2.2" fill="#fbe8ee" fill-opacity="0.5"/><rect x="466.5" y="435.0" width="2.2" height="2.2" fill="#f8f4c8" fill-opacity="0.5"/><rect x="480.1" y="432.2" width="2.2" height="2.2" fill="#f4f0b8" fill-opacity="0.5"/><rect x="491.9" y="432.0" width="2.2" height="2.2" fill="#ffffff" fill-opacity="0.5"/><rect x="502.1" y="433.5" width="2.2" height="2.2" fill="#f4f0b8" fill-opacity="0.5"/><rect x="552.7" y="432.2" width="2.2" height="2.2" fill="#ffffff" fill-opacity="0.5"/><rect x="565.1" y="434.2" width="2.2" height="2.2" fill="#fbe8ee" fill-opacity="0.5"/><rect x="589.9" y="431.2" width="2.2" height="2.2" fill="#f8f4c8" fill-opacity="0.5"/><rect x="598.6" y="432.6" width="2.2" height="2.2" fill="#f8f4c8" fill-opacity="0.5"/><rect x="624.7" y="433.0" width="2.2" height="2.2" fill="#f4f0b8" fill-opacity="0.5"/><rect x="635.4" y="433.0" width="2.2" height="2.2" fill="#f4f0b8" fill-opacity="0.5"/><rect x="648.8" y="433.2" width="2.2" height="2.2" fill="#ffffff" fill-opacity="0.5"/><rect x="659.4" y="434.8" width="2.2" height="2.2" fill="#fbe8ee" fill-opacity="0.5"/><rect x="673.0" y="432.0" width="2.2" height="2.2" fill="#ffffff" fill-opacity="0.5"/><rect x="694.4" y="432.0" width="2.2" height="2.2" fill="#ffffff" fill-opacity="0.5"/><rect x="718.8" y="432.3" width="2.2" height="2.2" fill="#f4f0b8" fill-opacity="0.5"/><rect x="299.6" y="443.5" width="2.2" height="2.2" fill="#fbe8ee" fill-opacity="0.5"/><rect x="310.7" y="444.0" width="2.2" height="2.2" fill="#fbe8ee" fill-opacity="0.5"/><rect x="323.7" y="444.3" width="2.2" height="2.2" fill="#ffffff" fill-opacity="0.5"/><rect x="334.2" y="444.9" width="2.2" height="2.2" fill="#ffffff" fill-opacity="0.5"/><rect x="348.9" y="443.1" width="2.2" height="2.2" fill="#f8f4c8" fill-opacity="0.5"/><rect x="361.5" y="445.1" width="2.2" height="2.2" fill="#f4f0b8" fill-opacity="0.5"/><rect x="397.1" y="443.9" width="2.2" height="2.2" fill="#ffffff" fill-opacity="0.5"/><rect x="408.2" y="444.5" width="2.2" height="2.2" fill="#ffffff" fill-opacity="0.5"/><rect x="420.6" y="444.9" width="2.2" height="2.2" fill="#f4f0b8" fill-opacity="0.5"/><rect x="433.6" y="445.2" width="2.2" height="2.2" fill="#f4f0b8" fill-opacity="0.5"/><rect x="457.1" y="445.6" width="2.2" height="2.2" fill="#f4f0b8" fill-opacity="0.5"/><rect x="466.9" y="445.7" width="2.2" height="2.2" fill="#f8f4c8" fill-opacity="0.5"/><rect x="490.6" y="442.9" width="2.2" height="2.2" fill="#ffffff" fill-opacity="0.5"/><rect x="504.5" y="444.1" width="2.2" height="2.2" fill="#f4f0b8" fill-opacity="0.5"/><rect x="514.1" y="445.8" width="2.2" height="2.2" fill="#fbe8ee" fill-opacity="0.5"/><rect x="538.5" y="442.8" width="2.2" height="2.2" fill="#f8f4c8" fill-opacity="0.5"/><rect x="562.9" y="445.8" width="2.2" height="2.2" fill="#f8f4c8" fill-opacity="0.5"/><rect x="588.2" y="445.1" width="2.2" height="2.2" fill="#f8f4c8" fill-opacity="0.5"/><rect x="612.0" y="443.2" width="2.2" height="2.2" fill="#f8f4c8" fill-opacity="0.5"/><rect x="659.0" y="442.8" width="2.2" height="2.2" fill="#f8f4c8" fill-opacity="0.5"/><rect x="670.9" y="442.8" width="2.2" height="2.2" fill="#f4f0b8" fill-opacity="0.5"/><rect x="683.0" y="444.1" width="2.2" height="2.2" fill="#ffffff" fill-opacity="0.5"/><rect x="695.2" y="445.8" width="2.2" height="2.2" fill="#f8f4c8" fill-opacity="0.5"/><rect x="706.8" y="443.4" width="2.2" height="2.2" fill="#f4f0b8" fill-opacity="0.5"/><rect x="721.6" y="443.6" width="2.2" height="2.2" fill="#fbe8ee" fill-opacity="0.5"/><rect x="301.0" y="455.4" width="2.2" height="2.2" fill="#f4f0b8" fill-opacity="0.5"/><rect x="313.5" y="454.4" width="2.2" height="2.2" fill="#f8f4c8" fill-opacity="0.5"/><rect x="322.2" y="456.1" width="2.2" height="2.2" fill="#f4f0b8" fill-opacity="0.5"/><rect x="335.3" y="454.2" width="2.2" height="2.2" fill="#ffffff" fill-opacity="0.5"/><rect x="348.8" y="457.0" width="2.2" height="2.2" fill="#f8f4c8" fill-opacity="0.5"/><rect x="358.5" y="453.7" width="2.2" height="2.2" fill="#ffffff" fill-opacity="0.5"/><rect x="373.4" y="453.8" width="2.2" height="2.2" fill="#ffffff" fill-opacity="0.5"/><rect x="383.4" y="454.5" width="2.2" height="2.2" fill="#f4f0b8" fill-opacity="0.5"/><rect x="408.3" y="455.1" width="2.2" height="2.2" fill="#f4f0b8" fill-opacity="0.5"/><rect x="420.9" y="453.7" width="2.2" height="2.2" fill="#f4f0b8" fill-opacity="0.5"/><rect x="444.9" y="456.8" width="2.2" height="2.2" fill="#fbe8ee" fill-opacity="0.5"/><rect x="456.2" y="456.4" width="2.2" height="2.2" fill="#fbe8ee" fill-opacity="0.5"/><rect x="491.5" y="453.4" width="2.2" height="2.2" fill="#ffffff" fill-opacity="0.5"/><rect x="503.9" y="453.0" width="2.2" height="2.2" fill="#ffffff" fill-opacity="0.5"/><rect x="538.3" y="456.6" width="2.2" height="2.2" fill="#f4f0b8" fill-opacity="0.5"/><rect x="562.4" y="453.3" width="2.2" height="2.2" fill="#fbe8ee" fill-opacity="0.5"/><rect x="574.8" y="455.9" width="2.2" height="2.2" fill="#f4f0b8" fill-opacity="0.5"/><rect x="589.6" y="455.9" width="2.2" height="2.2" fill="#fbe8ee" fill-opacity="0.5"/><rect x="658.8" y="455.1" width="2.2" height="2.2" fill="#f4f0b8" fill-opacity="0.5"/><rect x="672.3" y="453.5" width="2.2" height="2.2" fill="#fbe8ee" fill-opacity="0.5"/><rect x="684.1" y="455.7" width="2.2" height="2.2" fill="#f8f4c8" fill-opacity="0.5"/><rect x="720.5" y="453.3" width="2.2" height="2.2" fill="#f8f4c8" fill-opacity="0.5"/><rect x="731.3" y="456.2" width="2.2" height="2.2" fill="#f8f4c8" fill-opacity="0.5"/><rect x="744.8" y="454.3" width="2.2" height="2.2" fill="#fbe8ee" fill-opacity="0.5"/><rect x="301.0" y="464.7" width="2.2" height="2.2" fill="#fbe8ee" fill-opacity="0.5"/><rect x="313.7" y="466.9" width="2.2" height="2.2" fill="#ffffff" fill-opacity="0.5"/><rect x="325.8" y="465.7" width="2.2" height="2.2" fill="#f8f4c8" fill-opacity="0.5"/><rect x="360.9" y="465.8" width="2.2" height="2.2" fill="#f4f0b8" fill-opacity="0.5"/><rect x="384.6" y="466.4" width="2.2" height="2.2" fill="#ffffff" fill-opacity="0.5"/><rect x="397.0" y="467.1" width="2.2" height="2.2" fill="#f8f4c8" fill-opacity="0.5"/><rect x="432.8" y="467.3" width="2.2" height="2.2" fill="#ffffff" fill-opacity="0.5"/><rect x="442.7" y="467.4" width="2.2" height="2.2" fill="#f8f4c8" fill-opacity="0.5"/><rect x="482.0" y="467.7" width="2.2" height="2.2" fill="#f8f4c8" fill-opacity="0.5"/><rect x="492.3" y="465.2" width="2.2" height="2.2" fill="#f8f4c8" fill-opacity="0.5"/><rect x="527.8" y="466.0" width="2.2" height="2.2" fill="#f4f0b8" fill-opacity="0.5"/><rect x="575.8" y="466.3" width="2.2" height="2.2" fill="#fbe8ee" fill-opacity="0.5"/><rect x="599.4" y="464.3" width="2.2" height="2.2" fill="#f4f0b8" fill-opacity="0.5"/><rect x="612.1" y="465.4" width="2.2" height="2.2" fill="#f4f0b8" fill-opacity="0.5"/><rect x="623.9" y="465.3" width="2.2" height="2.2" fill="#f8f4c8" fill-opacity="0.5"/><rect x="660.8" y="466.5" width="2.2" height="2.2" fill="#f4f0b8" fill-opacity="0.5"/><rect x="672.2" y="466.7" width="2.2" height="2.2" fill="#fbe8ee" fill-opacity="0.5"/><rect x="683.1" y="465.0" width="2.2" height="2.2" fill="#fbe8ee" fill-opacity="0.5"/><rect x="707.7" y="466.8" width="2.2" height="2.2" fill="#f4f0b8" fill-opacity="0.5"/><rect x="719.6" y="464.1" width="2.2" height="2.2" fill="#f4f0b8" fill-opacity="0.5"/><rect x="743.2" y="464.5" width="2.2" height="2.2" fill="#f8f4c8" fill-opacity="0.5"/><rect x="322.2" y="477.8" width="2.2" height="2.2" fill="#ffffff" fill-opacity="0.5"/><rect x="371.1" y="476.5" width="2.2" height="2.2" fill="#ffffff" fill-opacity="0.5"/><rect x="395.7" y="475.1" width="2.2" height="2.2" fill="#f8f4c8" fill-opacity="0.5"/><rect x="420.0" y="478.0" width="2.2" height="2.2" fill="#ffffff" fill-opacity="0.5"/><rect x="431.4" y="477.5" width="2.2" height="2.2" fill="#f8f4c8" fill-opacity="0.5"/><rect x="444.9" y="476.0" width="2.2" height="2.2" fill="#f8f4c8" fill-opacity="0.5"/><rect x="454.8" y="477.3" width="2.2" height="2.2" fill="#ffffff" fill-opacity="0.5"/><rect x="493.3" y="476.8" width="2.2" height="2.2" fill="#f8f4c8" fill-opacity="0.5"/><rect x="515.0" y="476.5" width="2.2" height="2.2" fill="#ffffff" fill-opacity="0.5"/><rect x="527.5" y="475.4" width="2.2" height="2.2" fill="#fbe8ee" fill-opacity="0.5"/><rect x="551.2" y="478.6" width="2.2" height="2.2" fill="#ffffff" fill-opacity="0.5"/><rect x="587.4" y="475.3" width="2.2" height="2.2" fill="#fbe8ee" fill-opacity="0.5"/><rect x="622.8" y="477.9" width="2.2" height="2.2" fill="#ffffff" fill-opacity="0.5"/><rect x="648.9" y="477.1" width="2.2" height="2.2" fill="#fbe8ee" fill-opacity="0.5"/><rect x="671.0" y="478.6" width="2.2" height="2.2" fill="#f4f0b8" fill-opacity="0.5"/><rect x="696.3" y="478.8" width="2.2" height="2.2" fill="#ffffff" fill-opacity="0.5"/><rect x="721.2" y="477.5" width="2.2" height="2.2" fill="#fbe8ee" fill-opacity="0.5"/><rect x="731.4" y="478.0" width="2.2" height="2.2" fill="#f8f4c8" fill-opacity="0.5"/><rect x="745.7" y="478.2" width="2.2" height="2.2" fill="#ffffff" fill-opacity="0.5"/><rect x="323.0" y="488.7" width="2.2" height="2.2" fill="#ffffff" fill-opacity="0.5"/><rect x="337.3" y="486.0" width="2.2" height="2.2" fill="#ffffff" fill-opacity="0.5"/><rect x="370.5" y="487.6" width="2.2" height="2.2" fill="#ffffff" fill-opacity="0.5"/><rect x="397.6" y="487.6" width="2.2" height="2.2" fill="#f4f0b8" fill-opacity="0.5"/><rect x="406.8" y="488.7" width="2.2" height="2.2" fill="#ffffff" fill-opacity="0.5"/><rect x="432.2" y="489.4" width="2.2" height="2.2" fill="#fbe8ee" fill-opacity="0.5"/><rect x="444.6" y="487.0" width="2.2" height="2.2" fill="#fbe8ee" fill-opacity="0.5"/><rect x="466.3" y="488.3" width="2.2" height="2.2" fill="#f8f4c8" fill-opacity="0.5"/><rect x="478.9" y="489.2" width="2.2" height="2.2" fill="#f8f4c8" fill-opacity="0.5"/><rect x="492.1" y="486.3" width="2.2" height="2.2" fill="#ffffff" fill-opacity="0.5"/><rect x="517.6" y="489.3" width="2.2" height="2.2" fill="#f8f4c8" fill-opacity="0.5"/><rect x="529.6" y="489.1" width="2.2" height="2.2" fill="#f4f0b8" fill-opacity="0.5"/><rect x="540.8" y="488.2" width="2.2" height="2.2" fill="#fbe8ee" fill-opacity="0.5"/><rect x="574.7" y="488.8" width="2.2" height="2.2" fill="#f4f0b8" fill-opacity="0.5"/><rect x="598.6" y="486.9" width="2.2" height="2.2" fill="#ffffff" fill-opacity="0.5"/><rect x="613.5" y="486.2" width="2.2" height="2.2" fill="#f8f4c8" fill-opacity="0.5"/><rect x="646.3" y="486.7" width="2.2" height="2.2" fill="#f4f0b8" fill-opacity="0.5"/><rect x="661.1" y="486.9" width="2.2" height="2.2" fill="#f4f0b8" fill-opacity="0.5"/><rect x="742.1" y="486.4" width="2.2" height="2.2" fill="#f8f4c8" fill-opacity="0.5"/><rect x="298.9" y="498.6" width="2.2" height="2.2" fill="#f8f4c8" fill-opacity="0.5"/><rect x="313.5" y="500.8" width="2.2" height="2.2" fill="#fbe8ee" fill-opacity="0.5"/><rect x="323.9" y="500.5" width="2.2" height="2.2" fill="#ffffff" fill-opacity="0.5"/><rect x="335.5" y="500.3" width="2.2" height="2.2" fill="#ffffff" fill-opacity="0.5"/><rect x="358.3" y="498.9" width="2.2" height="2.2" fill="#f8f4c8" fill-opacity="0.5"/><rect x="373.3" y="500.3" width="2.2" height="2.2" fill="#fbe8ee" fill-opacity="0.5"/><rect x="384.8" y="498.2" width="2.2" height="2.2" fill="#f4f0b8" fill-opacity="0.5"/><rect x="408.3" y="497.1" width="2.2" height="2.2" fill="#fbe8ee" fill-opacity="0.5"/><rect x="418.3" y="498.0" width="2.2" height="2.2" fill="#f4f0b8" fill-opacity="0.5"/><rect x="466.0" y="500.7" width="2.2" height="2.2" fill="#ffffff" fill-opacity="0.5"/><rect x="491.0" y="497.6" width="2.2" height="2.2" fill="#fbe8ee" fill-opacity="0.5"/><rect x="505.0" y="498.3" width="2.2" height="2.2" fill="#fbe8ee" fill-opacity="0.5"/><rect x="516.5" y="497.6" width="2.2" height="2.2" fill="#fbe8ee" fill-opacity="0.5"/><rect x="528.3" y="499.0" width="2.2" height="2.2" fill="#f4f0b8" fill-opacity="0.5"/><rect x="541.8" y="499.5" width="2.2" height="2.2" fill="#fbe8ee" fill-opacity="0.5"/><rect x="564.1" y="499.3" width="2.2" height="2.2" fill="#ffffff" fill-opacity="0.5"/><rect x="600.8" y="500.8" width="2.2" height="2.2" fill="#f8f4c8" fill-opacity="0.5"/><rect x="646.7" y="500.9" width="2.2" height="2.2" fill="#fbe8ee" fill-opacity="0.5"/><rect x="673.2" y="500.0" width="2.2" height="2.2" fill="#fbe8ee" fill-opacity="0.5"/><rect x="697.2" y="498.2" width="2.2" height="2.2" fill="#fbe8ee" fill-opacity="0.5"/><rect x="721.9" y="499.4" width="2.2" height="2.2" fill="#fbe8ee" fill-opacity="0.5"/><rect x="746.0" y="498.8" width="2.2" height="2.2" fill="#ffffff" fill-opacity="0.5"/><rect x="298.4" y="509.5" width="2.2" height="2.2" fill="#ffffff" fill-opacity="0.5"/><rect x="311.8" y="508.1" width="2.2" height="2.2" fill="#fbe8ee" fill-opacity="0.5"/><rect x="334.5" y="511.6" width="2.2" height="2.2" fill="#f4f0b8" fill-opacity="0.5"/><rect x="347.6" y="509.6" width="2.2" height="2.2" fill="#ffffff" fill-opacity="0.5"/><rect x="370.1" y="511.0" width="2.2" height="2.2" fill="#ffffff" fill-opacity="0.5"/><rect x="394.4" y="508.7" width="2.2" height="2.2" fill="#f8f4c8" fill-opacity="0.5"/><rect x="420.3" y="511.6" width="2.2" height="2.2" fill="#fbe8ee" fill-opacity="0.5"/><rect x="444.6" y="510.6" width="2.2" height="2.2" fill="#fbe8ee" fill-opacity="0.5"/><rect x="457.0" y="508.8" width="2.2" height="2.2" fill="#f4f0b8" fill-opacity="0.5"/><rect x="491.0" y="509.3" width="2.2" height="2.2" fill="#ffffff" fill-opacity="0.5"/><rect x="504.5" y="508.0" width="2.2" height="2.2" fill="#f4f0b8" fill-opacity="0.5"/><rect x="517.7" y="511.6" width="2.2" height="2.2" fill="#f8f4c8" fill-opacity="0.5"/><rect x="539.7" y="510.0" width="2.2" height="2.2" fill="#f4f0b8" fill-opacity="0.5"/><rect x="550.5" y="511.4" width="2.2" height="2.2" fill="#f8f4c8" fill-opacity="0.5"/><rect x="577.2" y="508.2" width="2.2" height="2.2" fill="#f8f4c8" fill-opacity="0.5"/><rect x="599.9" y="511.4" width="2.2" height="2.2" fill="#f8f4c8" fill-opacity="0.5"/><rect x="613.3" y="511.3" width="2.2" height="2.2" fill="#f8f4c8" fill-opacity="0.5"/><rect x="647.3" y="508.4" width="2.2" height="2.2" fill="#f8f4c8" fill-opacity="0.5"/><rect x="659.4" y="508.7" width="2.2" height="2.2" fill="#f8f4c8" fill-opacity="0.5"/><rect x="673.8" y="509.9" width="2.2" height="2.2" fill="#fbe8ee" fill-opacity="0.5"/><rect x="696.0" y="509.6" width="2.2" height="2.2" fill="#f8f4c8" fill-opacity="0.5"/><rect x="706.3" y="511.5" width="2.2" height="2.2" fill="#f8f4c8" fill-opacity="0.5"/><rect x="721.6" y="508.8" width="2.2" height="2.2" fill="#f8f4c8" fill-opacity="0.5"/><rect x="312.8" y="522.5" width="2.2" height="2.2" fill="#f8f4c8" fill-opacity="0.5"/><rect x="326.0" y="522.2" width="2.2" height="2.2" fill="#f8f4c8" fill-opacity="0.5"/><rect x="337.4" y="520.6" width="2.2" height="2.2" fill="#f4f0b8" fill-opacity="0.5"/><rect x="347.1" y="520.2" width="2.2" height="2.2" fill="#fbe8ee" fill-opacity="0.5"/><rect x="361.6" y="520.3" width="2.2" height="2.2" fill="#fbe8ee" fill-opacity="0.5"/><rect x="372.3" y="521.3" width="2.2" height="2.2" fill="#f4f0b8" fill-opacity="0.5"/><rect x="408.7" y="521.3" width="2.2" height="2.2" fill="#ffffff" fill-opacity="0.5"/><rect x="419.8" y="521.8" width="2.2" height="2.2" fill="#fbe8ee" fill-opacity="0.5"/><rect x="442.5" y="521.0" width="2.2" height="2.2" fill="#f8f4c8" fill-opacity="0.5"/><rect x="454.6" y="520.3" width="2.2" height="2.2" fill="#fbe8ee" fill-opacity="0.5"/><rect x="466.9" y="520.5" width="2.2" height="2.2" fill="#fbe8ee" fill-opacity="0.5"/><rect x="479.8" y="519.5" width="2.2" height="2.2" fill="#f8f4c8" fill-opacity="0.5"/><rect x="493.9" y="521.4" width="2.2" height="2.2" fill="#f8f4c8" fill-opacity="0.5"/><rect x="528.8" y="522.2" width="2.2" height="2.2" fill="#f8f4c8" fill-opacity="0.5"/><rect x="566.0" y="519.4" width="2.2" height="2.2" fill="#f8f4c8" fill-opacity="0.5"/><rect x="576.0" y="520.0" width="2.2" height="2.2" fill="#fbe8ee" fill-opacity="0.5"/><rect x="587.1" y="522.2" width="2.2" height="2.2" fill="#f4f0b8" fill-opacity="0.5"/><rect x="611.7" y="522.2" width="2.2" height="2.2" fill="#f8f4c8" fill-opacity="0.5"/><rect x="636.0" y="520.0" width="2.2" height="2.2" fill="#fbe8ee" fill-opacity="0.5"/><rect x="671.0" y="520.5" width="2.2" height="2.2" fill="#fbe8ee" fill-opacity="0.5"/><rect x="685.8" y="519.6" width="2.2" height="2.2" fill="#fbe8ee" fill-opacity="0.5"/><rect x="697.0" y="519.7" width="2.2" height="2.2" fill="#f8f4c8" fill-opacity="0.5"/><rect x="718.0" y="520.6" width="2.2" height="2.2" fill="#ffffff" fill-opacity="0.5"/><rect x="731.3" y="521.0" width="2.2" height="2.2" fill="#fbe8ee" fill-opacity="0.5"/><rect x="742.1" y="521.3" width="2.2" height="2.2" fill="#ffffff" fill-opacity="0.5"/><rect x="360.7" y="530.7" width="2.2" height="2.2" fill="#fbe8ee" fill-opacity="0.5"/><rect x="382.1" y="531.7" width="2.2" height="2.2" fill="#ffffff" fill-opacity="0.5"/><rect x="396.4" y="530.1" width="2.2" height="2.2" fill="#fbe8ee" fill-opacity="0.5"/><rect x="409.8" y="530.4" width="2.2" height="2.2" fill="#ffffff" fill-opacity="0.5"/><rect x="430.3" y="531.1" width="2.2" height="2.2" fill="#f4f0b8" fill-opacity="0.5"/><rect x="443.1" y="530.9" width="2.2" height="2.2" fill="#fbe8ee" fill-opacity="0.5"/><rect x="455.0" y="530.8" width="2.2" height="2.2" fill="#fbe8ee" fill-opacity="0.5"/><rect x="466.1" y="532.2" width="2.2" height="2.2" fill="#ffffff" fill-opacity="0.5"/><rect x="480.3" y="532.9" width="2.2" height="2.2" fill="#ffffff" fill-opacity="0.5"/><rect x="491.8" y="532.5" width="2.2" height="2.2" fill="#f4f0b8" fill-opacity="0.5"/><rect x="514.4" y="532.3" width="2.2" height="2.2" fill="#f8f4c8" fill-opacity="0.5"/><rect x="538.8" y="531.1" width="2.2" height="2.2" fill="#ffffff" fill-opacity="0.5"/><rect x="553.8" y="532.8" width="2.2" height="2.2" fill="#f4f0b8" fill-opacity="0.5"/><rect x="564.4" y="530.4" width="2.2" height="2.2" fill="#fbe8ee" fill-opacity="0.5"/><rect x="586.4" y="532.3" width="2.2" height="2.2" fill="#f4f0b8" fill-opacity="0.5"/><rect x="598.4" y="533.5" width="2.2" height="2.2" fill="#f8f4c8" fill-opacity="0.5"/><rect x="670.8" y="532.2" width="2.2" height="2.2" fill="#fbe8ee" fill-opacity="0.5"/><rect x="685.4" y="533.4" width="2.2" height="2.2" fill="#f8f4c8" fill-opacity="0.5"/><rect x="695.4" y="531.1" width="2.2" height="2.2" fill="#fbe8ee" fill-opacity="0.5"/><rect x="719.4" y="533.5" width="2.2" height="2.2" fill="#ffffff" fill-opacity="0.5"/><rect x="733.5" y="531.7" width="2.2" height="2.2" fill="#ffffff" fill-opacity="0.5"/><rect x="745.4" y="532.1" width="2.2" height="2.2" fill="#fbe8ee" fill-opacity="0.5"/><rect x="299.9" y="541.1" width="2.2" height="2.2" fill="#fbe8ee" fill-opacity="0.5"/><rect x="313.6" y="541.2" width="2.2" height="2.2" fill="#f4f0b8" fill-opacity="0.5"/><rect x="336.1" y="543.3" width="2.2" height="2.2" fill="#fbe8ee" fill-opacity="0.5"/><rect x="349.3" y="544.4" width="2.2" height="2.2" fill="#f8f4c8" fill-opacity="0.5"/><rect x="360.5" y="542.2" width="2.2" height="2.2" fill="#ffffff" fill-opacity="0.5"/><rect x="373.2" y="542.6" width="2.2" height="2.2" fill="#fbe8ee" fill-opacity="0.5"/><rect x="397.0" y="544.8" width="2.2" height="2.2" fill="#f8f4c8" fill-opacity="0.5"/><rect x="421.2" y="541.8" width="2.2" height="2.2" fill="#f4f0b8" fill-opacity="0.5"/><rect x="445.1" y="542.2" width="2.2" height="2.2" fill="#f8f4c8" fill-opacity="0.5"/><rect x="455.9" y="541.5" width="2.2" height="2.2" fill="#ffffff" fill-opacity="0.5"/><rect x="478.2" y="541.4" width="2.2" height="2.2" fill="#fbe8ee" fill-opacity="0.5"/><rect x="491.0" y="542.5" width="2.2" height="2.2" fill="#f4f0b8" fill-opacity="0.5"/><rect x="515.5" y="544.8" width="2.2" height="2.2" fill="#f4f0b8" fill-opacity="0.5"/><rect x="574.1" y="542.2" width="2.2" height="2.2" fill="#f4f0b8" fill-opacity="0.5"/><rect x="613.7" y="543.7" width="2.2" height="2.2" fill="#fbe8ee" fill-opacity="0.5"/><rect x="672.2" y="542.5" width="2.2" height="2.2" fill="#ffffff" fill-opacity="0.5"/><rect x="709.6" y="542.3" width="2.2" height="2.2" fill="#fbe8ee" fill-opacity="0.5"/><rect x="721.0" y="542.2" width="2.2" height="2.2" fill="#fbe8ee" fill-opacity="0.5"/><rect x="298.4" y="554.0" width="2.2" height="2.2" fill="#f8f4c8" fill-opacity="0.5"/><rect x="312.4" y="555.4" width="2.2" height="2.2" fill="#fbe8ee" fill-opacity="0.5"/><rect x="337.5" y="555.8" width="2.2" height="2.2" fill="#f8f4c8" fill-opacity="0.5"/><rect x="346.3" y="555.0" width="2.2" height="2.2" fill="#ffffff" fill-opacity="0.5"/><rect x="358.5" y="554.4" width="2.2" height="2.2" fill="#f8f4c8" fill-opacity="0.5"/><rect x="383.7" y="554.4" width="2.2" height="2.2" fill="#fbe8ee" fill-opacity="0.5"/><rect x="396.9" y="555.7" width="2.2" height="2.2" fill="#ffffff" fill-opacity="0.5"/><rect x="409.8" y="553.6" width="2.2" height="2.2" fill="#f8f4c8" fill-opacity="0.5"/><rect x="430.8" y="552.0" width="2.2" height="2.2" fill="#fbe8ee" fill-opacity="0.5"/><rect x="454.2" y="553.3" width="2.2" height="2.2" fill="#f8f4c8" fill-opacity="0.5"/><rect x="467.9" y="553.1" width="2.2" height="2.2" fill="#fbe8ee" fill-opacity="0.5"/><rect x="493.4" y="553.7" width="2.2" height="2.2" fill="#ffffff" fill-opacity="0.5"/><rect x="515.0" y="555.0" width="2.2" height="2.2" fill="#ffffff" fill-opacity="0.5"/><rect x="528.5" y="553.2" width="2.2" height="2.2" fill="#f4f0b8" fill-opacity="0.5"/><rect x="540.2" y="552.4" width="2.2" height="2.2" fill="#f4f0b8" fill-opacity="0.5"/><rect x="566.0" y="555.1" width="2.2" height="2.2" fill="#fbe8ee" fill-opacity="0.5"/><rect x="599.9" y="555.2" width="2.2" height="2.2" fill="#ffffff" fill-opacity="0.5"/><rect x="613.1" y="555.3" width="2.2" height="2.2" fill="#fbe8ee" fill-opacity="0.5"/><rect x="637.5" y="552.1" width="2.2" height="2.2" fill="#f8f4c8" fill-opacity="0.5"/><rect x="649.8" y="553.5" width="2.2" height="2.2" fill="#ffffff" fill-opacity="0.5"/><rect x="672.1" y="554.8" width="2.2" height="2.2" fill="#f8f4c8" fill-opacity="0.5"/><rect x="696.0" y="555.9" width="2.2" height="2.2" fill="#f4f0b8" fill-opacity="0.5"/><rect x="733.2" y="552.9" width="2.2" height="2.2" fill="#ffffff" fill-opacity="0.5"/>
<g filter="url(#bl)"><rect x="250" y="250" width="365" height="33" rx="0" fill="#7a7a7a"/><path d="M560,272 L618,274" fill="none" stroke="#7a7a7a" stroke-width="16" stroke-linecap="round" stroke-linejoin="round"/><rect x="655" y="250" width="105" height="32" rx="0" fill="#7a7a7a"/><path d="M662,276 L735,276" fill="none" stroke="#7a7a7a" stroke-width="12" stroke-linecap="round" stroke-linejoin="round"/><path d="M284,278 L296,278" fill="none" stroke="#7a7a7a" stroke-width="22" stroke-linecap="round" stroke-linejoin="round"/><rect x="250" y="264" width="29" height="308" rx="0" fill="#7a7a7a"/><path d="M335.5,272 L335.5,388" fill="none" stroke="#7a7a7a" stroke-width="27" stroke-linecap="round" stroke-linejoin="round"/><path d="M335.5,388.5 L357,388.5" fill="none" stroke="#7a7a7a" stroke-width="25" stroke-linecap="round" stroke-linejoin="round"/><path d="M358,297 L368,297" fill="none" stroke="#7a7a7a" stroke-width="32" stroke-linecap="round" stroke-linejoin="round"/><path d="M458,272 L458,394" fill="none" stroke="#7a7a7a" stroke-width="17" stroke-linecap="round" stroke-linejoin="round"/><path d="M572,311 L588,313" fill="none" stroke="#7a7a7a" stroke-width="31" stroke-linecap="round" stroke-linejoin="round"/><path d="M565,410 L600,412 L616,413" fill="none" stroke="#7a7a7a" stroke-width="32" stroke-linecap="round" stroke-linejoin="round"/><rect x="741" y="250" width="40" height="330" rx="0" fill="#7a7a7a"/><path d="M739,326 L739,341" fill="none" stroke="#7a7a7a" stroke-width="30" stroke-linecap="round" stroke-linejoin="round"/><path d="M713,414.5 L755,414.5" fill="none" stroke="#7a7a7a" stroke-width="31" stroke-linecap="round" stroke-linejoin="round"/><path d="M742,490 L752,490" fill="none" stroke="#7a7a7a" stroke-width="29" stroke-linecap="round" stroke-linejoin="round"/><rect x="250" y="554" width="520" height="30" rx="0" fill="#7a7a7a"/><path d="M270,467 L300,468 L340,466 L372,462 L420,475 L462,479 L500,474 L530,476" fill="none" stroke="#7a7a7a" stroke-width="32" stroke-linecap="round" stroke-linejoin="round"/><path d="M293,428 L293,455" fill="none" stroke="#7a7a7a" stroke-width="34" stroke-linecap="round" stroke-linejoin="round"/><path d="M522,464 L532,468" fill="none" stroke="#7a7a7a" stroke-width="38" stroke-linecap="round" stroke-linejoin="round"/><path d="M533,489 L564,490" fill="none" stroke="#7a7a7a" stroke-width="28" stroke-linecap="round" stroke-linejoin="round"/><path d="M458,500 L458,508" fill="none" stroke="#7a7a7a" stroke-width="28" stroke-linecap="round" stroke-linejoin="round"/><path d="M286,540 L293,540" fill="none" stroke="#7a7a7a" stroke-width="30" stroke-linecap="round" stroke-linejoin="round"/><path d="M373,524 L375,538" fill="none" stroke="#7a7a7a" stroke-width="30" stroke-linecap="round" stroke-linejoin="round"/><path d="M399,541 L402,548" fill="none" stroke="#7a7a7a" stroke-width="34" stroke-linecap="round" stroke-linejoin="round"/><path d="M630,487.5 L652,487.5" fill="none" stroke="#7a7a7a" stroke-width="31" stroke-linecap="round" stroke-linejoin="round"/><path d="M653,490 L653,560" fill="none" stroke="#7a7a7a" stroke-width="28" stroke-linecap="round" stroke-linejoin="round"/><path d="M621,540 L655,540" fill="none" stroke="#7a7a7a" stroke-width="29" stroke-linecap="round" stroke-linejoin="round"/></g>
<g clip-path="url(#sq)" filter="url(#bl)" fill="#262626"><path d="M484,281 L574,291 L592,297 L592,329 L560,318 L510,309 L482,299 Q472,296 474,288 Q476,281 484,281 Z"/><path d="M462,352 L480,351 Q490,352 491,362 L570,378 Q582,382 581,392 Q580,403 570,402 L462,390 Z"/></g>
</g>
<g stroke="#8c8c8c" stroke-opacity="0.55" stroke-width="1"><line x1="512.1" y1="58" x2="511.4" y2="609"/><line x1="818.6" y1="58" x2="821" y2="609"/><line x1="277" y1="340.5" x2="1115" y2="340.5"/></g>
<rect x="310.3" y="259.5" width="3.2" height="3.2" fill="#d41fe6"/><rect x="311.5" y="263.5" width="3.2" height="3.2" fill="#2b2bea"/><rect x="312.7" y="266.5" width="3.2" height="3.2" fill="#1fc6e6"/><rect x="321.5" y="259.4" width="3.2" height="3.2" fill="#d41fe6"/><rect x="322.7" y="263.2" width="3.2" height="3.2" fill="#7b22ea"/><rect x="323.9" y="266.1" width="3.2" height="3.2" fill="#1fc6e6"/><rect x="333.2" y="259.8" width="3.2" height="3.2" fill="#d41fe6"/><rect x="334.4" y="263.2" width="3.2" height="3.2" fill="#2b2bea"/><rect x="347.8" y="259.6" width="3.2" height="3.2" fill="#d41fe6"/><rect x="349.0" y="263.1" width="3.2" height="3.2" fill="#2b2bea"/><rect x="350.2" y="266.4" width="3.2" height="3.2" fill="#1fc6e6"/><rect x="357.1" y="259.0" width="3.2" height="3.2" fill="#d41fe6"/><rect x="358.3" y="262.7" width="3.2" height="3.2" fill="#2b2bea"/><rect x="359.5" y="266.3" width="3.2" height="3.2" fill="#1fc6e6"/><rect x="371.4" y="259.4" width="3.2" height="3.2" fill="#d41fe6"/><rect x="372.6" y="263.2" width="3.2" height="3.2" fill="#2b2bea"/><rect x="373.8" y="266.3" width="3.2" height="3.2" fill="#1fc6e6"/><rect x="381.7" y="260.0" width="3.2" height="3.2" fill="#d41fe6"/><rect x="382.9" y="263.6" width="3.2" height="3.2" fill="#7b22ea"/><rect x="384.1" y="266.1" width="3.2" height="3.2" fill="#1fc6e6"/><rect x="393.6" y="259.1" width="3.2" height="3.2" fill="#d41fe6"/><rect x="394.8" y="262.5" width="3.2" height="3.2" fill="#7b22ea"/><rect x="396.0" y="267.0" width="3.2" height="3.2" fill="#1fc6e6"/><rect x="406.1" y="259.9" width="3.2" height="3.2" fill="#d41fe6"/><rect x="407.3" y="263.4" width="3.2" height="3.2" fill="#2b2bea"/><rect x="408.5" y="267.1" width="3.2" height="3.2" fill="#1fc6e6"/><rect x="418.3" y="260.0" width="3.2" height="3.2" fill="#d41fe6"/><rect x="419.5" y="262.9" width="3.2" height="3.2" fill="#2b2bea"/><rect x="420.7" y="266.8" width="3.2" height="3.2" fill="#1fc6e6"/><rect x="429.7" y="258.9" width="3.2" height="3.2" fill="#d41fe6"/><rect x="430.9" y="262.8" width="3.2" height="3.2" fill="#7b22ea"/><rect x="441.3" y="259.1" width="3.2" height="3.2" fill="#d41fe6"/><rect x="442.5" y="262.5" width="3.2" height="3.2" fill="#2b2bea"/><rect x="453.4" y="259.5" width="3.2" height="3.2" fill="#d41fe6"/><rect x="454.6" y="262.9" width="3.2" height="3.2" fill="#2b2bea"/><rect x="455.8" y="265.8" width="3.2" height="3.2" fill="#1fc6e6"/><rect x="466.8" y="258.9" width="3.2" height="3.2" fill="#d41fe6"/><rect x="468.0" y="262.9" width="3.2" height="3.2" fill="#2b2bea"/><rect x="469.2" y="267.2" width="3.2" height="3.2" fill="#1fc6e6"/><rect x="479.3" y="259.2" width="3.2" height="3.2" fill="#d41fe6"/><rect x="480.5" y="263.5" width="3.2" height="3.2" fill="#2b2bea"/><rect x="481.7" y="267.0" width="3.2" height="3.2" fill="#1fc6e6"/><rect x="490.8" y="258.9" width="3.2" height="3.2" fill="#d41fe6"/><rect x="492.0" y="263.6" width="3.2" height="3.2" fill="#2b2bea"/><rect x="493.2" y="266.8" width="3.2" height="3.2" fill="#1fc6e6"/><rect x="501.9" y="259.2" width="3.2" height="3.2" fill="#d41fe6"/><rect x="503.1" y="262.5" width="3.2" height="3.2" fill="#2b2bea"/><rect x="504.3" y="266.0" width="3.2" height="3.2" fill="#1fc6e6"/><rect x="514.7" y="259.2" width="3.2" height="3.2" fill="#d41fe6"/><rect x="515.9" y="262.9" width="3.2" height="3.2" fill="#7b22ea"/><rect x="517.1" y="266.5" width="3.2" height="3.2" fill="#1fc6e6"/><rect x="527.5" y="259.0" width="3.2" height="3.2" fill="#d41fe6"/><rect x="528.7" y="262.6" width="3.2" height="3.2" fill="#7b22ea"/><rect x="537.6" y="259.0" width="3.2" height="3.2" fill="#d41fe6"/><rect x="538.8" y="263.3" width="3.2" height="3.2" fill="#7b22ea"/><rect x="540.0" y="267.1" width="3.2" height="3.2" fill="#1fc6e6"/><rect x="551.5" y="259.5" width="3.2" height="3.2" fill="#d41fe6"/><rect x="552.7" y="262.9" width="3.2" height="3.2" fill="#2b2bea"/><rect x="553.9" y="267.1" width="3.2" height="3.2" fill="#1fc6e6"/><rect x="561.6" y="259.6" width="3.2" height="3.2" fill="#d41fe6"/><rect x="562.8" y="262.7" width="3.2" height="3.2" fill="#7b22ea"/><rect x="564.0" y="266.1" width="3.2" height="3.2" fill="#1fc6e6"/><rect x="573.4" y="259.7" width="3.2" height="3.2" fill="#d41fe6"/><rect x="574.6" y="262.5" width="3.2" height="3.2" fill="#2b2bea"/><rect x="575.8" y="267.0" width="3.2" height="3.2" fill="#1fc6e6"/><rect x="586.7" y="259.1" width="3.2" height="3.2" fill="#d41fe6"/><rect x="587.9" y="263.5" width="3.2" height="3.2" fill="#2b2bea"/><rect x="589.1" y="266.0" width="3.2" height="3.2" fill="#1fc6e6"/><rect x="598.2" y="258.9" width="3.2" height="3.2" fill="#d41fe6"/><rect x="599.4" y="262.6" width="3.2" height="3.2" fill="#2b2bea"/><rect x="600.6" y="265.8" width="3.2" height="3.2" fill="#1fc6e6"/><rect x="610.0" y="259.9" width="3.2" height="3.2" fill="#d41fe6"/><rect x="611.2" y="263.6" width="3.2" height="3.2" fill="#2b2bea"/><rect x="612.4" y="266.5" width="3.2" height="3.2" fill="#1fc6e6"/><rect x="621.3" y="258.8" width="3.2" height="3.2" fill="#d41fe6"/><rect x="622.5" y="262.4" width="3.2" height="3.2" fill="#7b22ea"/><rect x="623.7" y="267.1" width="3.2" height="3.2" fill="#1fc6e6"/><rect x="633.0" y="259.6" width="3.2" height="3.2" fill="#d41fe6"/><rect x="634.2" y="263.0" width="3.2" height="3.2" fill="#7b22ea"/><rect x="635.4" y="267.2" width="3.2" height="3.2" fill="#1fc6e6"/><rect x="645.1" y="259.5" width="3.2" height="3.2" fill="#d41fe6"/><rect x="646.3" y="263.3" width="3.2" height="3.2" fill="#7b22ea"/><rect x="647.5" y="266.7" width="3.2" height="3.2" fill="#1fc6e6"/><rect x="659.3" y="259.9" width="3.2" height="3.2" fill="#d41fe6"/><rect x="660.5" y="262.8" width="3.2" height="3.2" fill="#2b2bea"/><rect x="671.5" y="259.3" width="3.2" height="3.2" fill="#d41fe6"/><rect x="672.7" y="263.3" width="3.2" height="3.2" fill="#7b22ea"/><rect x="673.9" y="266.6" width="3.2" height="3.2" fill="#1fc6e6"/><rect x="682.0" y="259.5" width="3.2" height="3.2" fill="#d41fe6"/><rect x="683.2" y="263.1" width="3.2" height="3.2" fill="#2b2bea"/><rect x="684.4" y="267.2" width="3.2" height="3.2" fill="#1fc6e6"/><rect x="695.5" y="259.7" width="3.2" height="3.2" fill="#d41fe6"/><rect x="696.7" y="262.9" width="3.2" height="3.2" fill="#7b22ea"/><rect x="697.9" y="266.3" width="3.2" height="3.2" fill="#1fc6e6"/><rect x="707.4" y="258.9" width="3.2" height="3.2" fill="#d41fe6"/><rect x="708.6" y="263.3" width="3.2" height="3.2" fill="#2b2bea"/><rect x="709.8" y="266.4" width="3.2" height="3.2" fill="#1fc6e6"/><rect x="717.6" y="259.6" width="3.2" height="3.2" fill="#d41fe6"/><rect x="718.8" y="263.0" width="3.2" height="3.2" fill="#2b2bea"/><rect x="729.7" y="258.8" width="3.2" height="3.2" fill="#d41fe6"/><rect x="730.9" y="262.8" width="3.2" height="3.2" fill="#2b2bea"/><rect x="732.1" y="265.9" width="3.2" height="3.2" fill="#1fc6e6"/><rect x="743.6" y="259.6" width="3.2" height="3.2" fill="#d41fe6"/><rect x="744.8" y="262.9" width="3.2" height="3.2" fill="#7b22ea"/><rect x="746.0" y="266.7" width="3.2" height="3.2" fill="#1fc6e6"/><rect x="753.5" y="259.3" width="3.2" height="3.2" fill="#d41fe6"/><rect x="754.7" y="263.4" width="3.2" height="3.2" fill="#7b22ea"/><rect x="316.9" y="260.9" width="3.2" height="3.2" fill="#7b22ea"/><rect x="338.2" y="260.9" width="3.2" height="3.2" fill="#7b22ea"/><rect x="366.4" y="260.9" width="3.2" height="3.2" fill="#7b22ea"/><rect x="458.4" y="260.9" width="3.2" height="3.2" fill="#7b22ea"/><rect x="483.1" y="260.9" width="3.2" height="3.2" fill="#7b22ea"/><rect x="507.9" y="260.9" width="3.2" height="3.2" fill="#7b22ea"/><rect x="555.3" y="260.9" width="3.2" height="3.2" fill="#7b22ea"/><rect x="625.8" y="260.9" width="3.2" height="3.2" fill="#7b22ea"/><rect x="654.6" y="260.9" width="3.2" height="3.2" fill="#7b22ea"/><rect x="677.7" y="260.9" width="3.2" height="3.2" fill="#7b22ea"/><rect x="699.3" y="260.9" width="3.2" height="3.2" fill="#7b22ea"/><rect x="746.2" y="260.9" width="3.2" height="3.2" fill="#7b22ea"/><rect x="755.4" y="268.3" width="3.2" height="3.2" fill="#d41fe6"/><rect x="752.7" y="270.8" width="3.2" height="3.2" fill="#2b2bea"/><rect x="748.2" y="272.8" width="3.2" height="3.2" fill="#1fc6e6"/><rect x="755.8" y="280.8" width="3.2" height="3.2" fill="#d41fe6"/><rect x="752.5" y="283.3" width="3.2" height="3.2" fill="#2b2bea"/><rect x="756.1" y="293.8" width="3.2" height="3.2" fill="#d41fe6"/><rect x="752.1" y="296.3" width="3.2" height="3.2" fill="#2b2bea"/><rect x="748.1" y="298.3" width="3.2" height="3.2" fill="#1fc6e6"/><rect x="756.1" y="304.3" width="3.2" height="3.2" fill="#d41fe6"/><rect x="752.1" y="306.8" width="3.2" height="3.2" fill="#2b2bea"/><rect x="749.2" y="308.8" width="3.2" height="3.2" fill="#1fc6e6"/><rect x="756.0" y="316.5" width="3.2" height="3.2" fill="#d41fe6"/><rect x="752.7" y="319.0" width="3.2" height="3.2" fill="#2b2bea"/><rect x="755.5" y="329.6" width="3.2" height="3.2" fill="#d41fe6"/><rect x="752.8" y="332.1" width="3.2" height="3.2" fill="#7b22ea"/><rect x="748.8" y="334.1" width="3.2" height="3.2" fill="#1fc6e6"/><rect x="756.3" y="340.8" width="3.2" height="3.2" fill="#d41fe6"/><rect x="752.3" y="343.3" width="3.2" height="3.2" fill="#2b2bea"/><rect x="756.3" y="353.3" width="3.2" height="3.2" fill="#d41fe6"/><rect x="752.4" y="355.8" width="3.2" height="3.2" fill="#2b2bea"/><rect x="749.3" y="357.8" width="3.2" height="3.2" fill="#1fc6e6"/><rect x="756.0" y="365.4" width="3.2" height="3.2" fill="#d41fe6"/><rect x="752.6" y="367.9" width="3.2" height="3.2" fill="#2b2bea"/><rect x="756.4" y="377.8" width="3.2" height="3.2" fill="#d41fe6"/><rect x="752.4" y="380.3" width="3.2" height="3.2" fill="#7b22ea"/><rect x="749.6" y="382.3" width="3.2" height="3.2" fill="#1fc6e6"/><rect x="755.7" y="389.5" width="3.2" height="3.2" fill="#d41fe6"/><rect x="752.0" y="392.0" width="3.2" height="3.2" fill="#2b2bea"/><rect x="749.3" y="394.0" width="3.2" height="3.2" fill="#1fc6e6"/><rect x="755.4" y="400.4" width="3.2" height="3.2" fill="#d41fe6"/><rect x="752.7" y="402.9" width="3.2" height="3.2" fill="#2b2bea"/><rect x="755.7" y="411.4" width="3.2" height="3.2" fill="#d41fe6"/><rect x="752.7" y="413.9" width="3.2" height="3.2" fill="#2b2bea"/><rect x="748.9" y="415.9" width="3.2" height="3.2" fill="#1fc6e6"/><rect x="756.2" y="425.1" width="3.2" height="3.2" fill="#d41fe6"/><rect x="752.6" y="427.6" width="3.2" height="3.2" fill="#7b22ea"/><rect x="749.6" y="429.6" width="3.2" height="3.2" fill="#1fc6e6"/><rect x="755.6" y="435.2" width="3.2" height="3.2" fill="#d41fe6"/><rect x="752.4" y="437.7" width="3.2" height="3.2" fill="#2b2bea"/><rect x="755.9" y="448.8" width="3.2" height="3.2" fill="#d41fe6"/><rect x="752.7" y="451.3" width="3.2" height="3.2" fill="#2b2bea"/><rect x="748.7" y="453.3" width="3.2" height="3.2" fill="#1fc6e6"/><rect x="756.3" y="461.4" width="3.2" height="3.2" fill="#d41fe6"/><rect x="752.1" y="463.9" width="3.2" height="3.2" fill="#7b22ea"/><rect x="756.0" y="472.5" width="3.2" height="3.2" fill="#d41fe6"/><rect x="752.1" y="475.0" width="3.2" height="3.2" fill="#2b2bea"/><rect x="749.1" y="477.0" width="3.2" height="3.2" fill="#1fc6e6"/><rect x="756.4" y="483.0" width="3.2" height="3.2" fill="#d41fe6"/><rect x="752.4" y="485.5" width="3.2" height="3.2" fill="#2b2bea"/><rect x="755.9" y="496.6" width="3.2" height="3.2" fill="#d41fe6"/><rect x="752.6" y="499.1" width="3.2" height="3.2" fill="#2b2bea"/><rect x="748.8" y="501.1" width="3.2" height="3.2" fill="#1fc6e6"/><rect x="756.3" y="509.8" width="3.2" height="3.2" fill="#d41fe6"/><rect x="752.2" y="512.3" width="3.2" height="3.2" fill="#2b2bea"/><rect x="748.8" y="514.3" width="3.2" height="3.2" fill="#1fc6e6"/><rect x="756.3" y="521.3" width="3.2" height="3.2" fill="#d41fe6"/><rect x="752.4" y="523.8" width="3.2" height="3.2" fill="#2b2bea"/><rect x="749.1" y="525.8" width="3.2" height="3.2" fill="#1fc6e6"/><rect x="755.5" y="533.7" width="3.2" height="3.2" fill="#d41fe6"/><rect x="752.7" y="536.2" width="3.2" height="3.2" fill="#2b2bea"/><rect x="748.5" y="538.2" width="3.2" height="3.2" fill="#1fc6e6"/><rect x="755.7" y="545.0" width="3.2" height="3.2" fill="#d41fe6"/><rect x="752.3" y="547.5" width="3.2" height="3.2" fill="#2b2bea"/><rect x="749.3" y="549.5" width="3.2" height="3.2" fill="#1fc6e6"/><rect x="755.9" y="555.3" width="3.2" height="3.2" fill="#d41fe6"/><rect x="752.2" y="557.8" width="3.2" height="3.2" fill="#2b2bea"/><rect x="748.8" y="559.8" width="3.2" height="3.2" fill="#1fc6e6"/><rect x="309.3" y="280.3" width="3.2" height="3.2" fill="#d41fe6"/><rect x="309.4" y="292.1" width="3.2" height="3.2" fill="#d41fe6"/><rect x="309.1" y="304.5" width="3.2" height="3.2" fill="#d41fe6"/><rect x="309.5" y="316.4" width="3.2" height="3.2" fill="#d41fe6"/><rect x="315.8" y="284.5" width="3.2" height="3.2" fill="#7b22ea"/><rect x="315.8" y="295.8" width="3.2" height="3.2" fill="#7b22ea"/><rect x="315.6" y="308.0" width="3.2" height="3.2" fill="#7b22ea"/><rect x="315.8" y="319.2" width="3.2" height="3.2" fill="#7b22ea"/><rect x="324.2" y="278.8" width="3.2" height="3.2" fill="#2b2bea"/><rect x="324.1" y="289.4" width="3.2" height="3.2" fill="#2b2bea"/><rect x="324.8" y="299.0" width="3.2" height="3.2" fill="#2b2bea"/><rect x="324.1" y="310.1" width="3.2" height="3.2" fill="#2b2bea"/><rect x="324.2" y="320.0" width="3.2" height="3.2" fill="#2b2bea"/><rect x="331.7" y="281.3" width="3.2" height="3.2" fill="#1fc6e6"/><rect x="331.7" y="295.0" width="3.2" height="3.2" fill="#1fc6e6"/><rect x="331.3" y="309.6" width="3.2" height="3.2" fill="#1fc6e6"/><rect x="308.9" y="362.1" width="3.2" height="3.2" fill="#2b2bea"/><rect x="316.6" y="358.8" width="3.2" height="3.2" fill="#2b2bea"/><rect x="309.9" y="373.0" width="3.2" height="3.2" fill="#2b2bea"/><rect x="316.4" y="371.7" width="3.2" height="3.2" fill="#2b2bea"/><rect x="324.4" y="362.6" width="3.2" height="3.2" fill="#1fc6e6"/><rect x="331.1" y="360.0" width="3.2" height="3.2" fill="#1fc6e6"/><rect x="307.9" y="389.8" width="3.2" height="3.2" fill="#2b2bea"/><rect x="315.6" y="390.2" width="3.2" height="3.2" fill="#2b2bea"/><rect x="322.7" y="389.5" width="3.2" height="3.2" fill="#2b2bea"/><rect x="329.4" y="389.4" width="3.2" height="3.2" fill="#2b2bea"/><rect x="337.3" y="390.1" width="3.2" height="3.2" fill="#2b2bea"/><rect x="344.5" y="388.8" width="3.2" height="3.2" fill="#2b2bea"/><rect x="350.5" y="389.6" width="3.2" height="3.2" fill="#2b2bea"/><rect x="358.1" y="389.2" width="3.2" height="3.2" fill="#2b2bea"/><rect x="365.1" y="388.6" width="3.2" height="3.2" fill="#2b2bea"/><rect x="372.4" y="388.3" width="3.2" height="3.2" fill="#2b2bea"/><rect x="316.5" y="388.8" width="3.2" height="3.2" fill="#d41fe6"/><rect x="327.1" y="389.6" width="3.2" height="3.2" fill="#d41fe6"/><rect x="337.0" y="388.8" width="3.2" height="3.2" fill="#d41fe6"/><rect x="348.2" y="388.5" width="3.2" height="3.2" fill="#d41fe6"/><rect x="358.0" y="388.0" width="3.2" height="3.2" fill="#d41fe6"/><rect x="414.4" y="390.8" width="3.2" height="3.2" fill="#d41fe6"/><rect x="421.9" y="391.3" width="3.2" height="3.2" fill="#d41fe6"/><rect x="428.6" y="391.0" width="3.2" height="3.2" fill="#d41fe6"/><rect x="435.6" y="390.0" width="3.2" height="3.2" fill="#d41fe6"/><rect x="442.5" y="389.7" width="3.2" height="3.2" fill="#d41fe6"/><rect x="450.0" y="389.6" width="3.2" height="3.2" fill="#d41fe6"/><rect x="456.1" y="389.3" width="3.2" height="3.2" fill="#d41fe6"/><rect x="463.7" y="388.7" width="3.2" height="3.2" fill="#d41fe6"/><rect x="418.8" y="390.3" width="3.2" height="3.2" fill="#2b2bea"/><rect x="426.9" y="390.3" width="3.2" height="3.2" fill="#2b2bea"/><rect x="434.6" y="389.5" width="3.2" height="3.2" fill="#2b2bea"/><rect x="442.7" y="388.5" width="3.2" height="3.2" fill="#2b2bea"/><rect x="450.7" y="387.5" width="3.2" height="3.2" fill="#2b2bea"/><rect x="458.2" y="387.4" width="3.2" height="3.2" fill="#2b2bea"/><rect x="447.8" y="281.2" width="3.2" height="3.2" fill="#d41fe6"/><rect x="448.6" y="293.7" width="3.2" height="3.2" fill="#d41fe6"/><rect x="448.1" y="306.2" width="3.2" height="3.2" fill="#d41fe6"/><rect x="448.6" y="317.6" width="3.2" height="3.2" fill="#d41fe6"/><rect x="448.6" y="330.0" width="3.2" height="3.2" fill="#d41fe6"/><rect x="448.4" y="341.9" width="3.2" height="3.2" fill="#d41fe6"/><rect x="449.0" y="354.3" width="3.2" height="3.2" fill="#d41fe6"/><rect x="448.6" y="366.6" width="3.2" height="3.2" fill="#d41fe6"/><rect x="449.0" y="377.8" width="3.2" height="3.2" fill="#d41fe6"/><rect x="456.5" y="283.7" width="3.2" height="3.2" fill="#7b22ea"/><rect x="456.1" y="295.8" width="3.2" height="3.2" fill="#7b22ea"/><rect x="455.9" y="308.0" width="3.2" height="3.2" fill="#7b22ea"/><rect x="456.3" y="320.4" width="3.2" height="3.2" fill="#7b22ea"/><rect x="456.1" y="333.9" width="3.2" height="3.2" fill="#7b22ea"/><rect x="456.5" y="345.9" width="3.2" height="3.2" fill="#7b22ea"/><rect x="457.0" y="358.5" width="3.2" height="3.2" fill="#7b22ea"/><rect x="457.0" y="371.1" width="3.2" height="3.2" fill="#7b22ea"/><rect x="456.8" y="382.9" width="3.2" height="3.2" fill="#7b22ea"/><rect x="462.5" y="288.7" width="3.2" height="3.2" fill="#2b2bea"/><rect x="461.9" y="301.5" width="3.2" height="3.2" fill="#2b2bea"/><rect x="462.0" y="313.5" width="3.2" height="3.2" fill="#2b2bea"/><rect x="462.0" y="326.1" width="3.2" height="3.2" fill="#2b2bea"/><rect x="462.5" y="338.2" width="3.2" height="3.2" fill="#2b2bea"/><rect x="462.9" y="351.2" width="3.2" height="3.2" fill="#2b2bea"/><rect x="462.4" y="363.9" width="3.2" height="3.2" fill="#2b2bea"/><rect x="462.2" y="376.1" width="3.2" height="3.2" fill="#2b2bea"/><rect x="547.6" y="283.5" width="3.2" height="3.2" fill="#d41fe6"/><rect x="547.1" y="296.0" width="3.2" height="3.2" fill="#d41fe6"/><rect x="547.1" y="307.1" width="3.2" height="3.2" fill="#d41fe6"/><rect x="547.0" y="319.3" width="3.2" height="3.2" fill="#d41fe6"/><rect x="546.9" y="332.7" width="3.2" height="3.2" fill="#d41fe6"/><rect x="547.2" y="345.1" width="3.2" height="3.2" fill="#d41fe6"/><rect x="547.8" y="356.0" width="3.2" height="3.2" fill="#d41fe6"/><rect x="548.2" y="369.7" width="3.2" height="3.2" fill="#d41fe6"/><rect x="546.7" y="381.8" width="3.2" height="3.2" fill="#d41fe6"/><rect x="547.3" y="393.4" width="3.2" height="3.2" fill="#d41fe6"/><rect x="552.7" y="288.0" width="3.2" height="3.2" fill="#2b2bea"/><rect x="551.9" y="303.7" width="3.2" height="3.2" fill="#2b2bea"/><rect x="552.3" y="317.5" width="3.2" height="3.2" fill="#2b2bea"/><rect x="552.7" y="332.6" width="3.2" height="3.2" fill="#2b2bea"/><rect x="552.1" y="346.1" width="3.2" height="3.2" fill="#2b2bea"/><rect x="552.1" y="361.2" width="3.2" height="3.2" fill="#2b2bea"/><rect x="551.4" y="375.1" width="3.2" height="3.2" fill="#2b2bea"/><rect x="551.9" y="389.8" width="3.2" height="3.2" fill="#2b2bea"/><rect x="498.4" y="284.4" width="3.2" height="3.2" fill="#1fc6e6"/><rect x="495.4" y="290.4" width="3.2" height="3.2" fill="#1fc6e6"/><rect x="488.4" y="294.4" width="3.2" height="3.2" fill="#1fc6e6"/><rect x="483.4" y="300.4" width="3.2" height="3.2" fill="#1fc6e6"/><rect x="632.4" y="327.4" width="3.2" height="3.2" fill="#d41fe6"/><rect x="646.4" y="325.4" width="3.2" height="3.2" fill="#d41fe6"/><rect x="632.4" y="339.4" width="3.2" height="3.2" fill="#2b2bea"/><rect x="646.4" y="339.4" width="3.2" height="3.2" fill="#2b2bea"/><rect x="634.4" y="325.4" width="3.2" height="3.2" fill="#1fc6e6"/><rect x="648.4" y="337.4" width="3.2" height="3.2" fill="#1fc6e6"/><rect x="573.3" y="403.7" width="3.2" height="3.2" fill="#d41fe6"/><rect x="583.7" y="405.4" width="3.2" height="3.2" fill="#d41fe6"/><rect x="594.2" y="407.9" width="3.2" height="3.2" fill="#d41fe6"/><rect x="604.8" y="410.4" width="3.2" height="3.2" fill="#d41fe6"/><rect x="599.2" y="416.1" width="3.2" height="3.2" fill="#2b2bea"/><rect x="606.8" y="415.0" width="3.2" height="3.2" fill="#2b2bea"/><rect x="613.8" y="416.0" width="3.2" height="3.2" fill="#2b2bea"/><rect x="622.9" y="415.6" width="3.2" height="3.2" fill="#2b2bea"/><rect x="630.2" y="415.0" width="3.2" height="3.2" fill="#2b2bea"/><rect x="698.7" y="413.5" width="3.2" height="3.2" fill="#d41fe6"/><rect x="707.2" y="414.1" width="3.2" height="3.2" fill="#d41fe6"/><rect x="716.1" y="413.9" width="3.2" height="3.2" fill="#d41fe6"/><rect x="724.0" y="415.7" width="3.2" height="3.2" fill="#d41fe6"/><rect x="733.7" y="416.0" width="3.2" height="3.2" fill="#d41fe6"/><rect x="741.0" y="415.2" width="3.2" height="3.2" fill="#d41fe6"/><rect x="750.0" y="416.3" width="3.2" height="3.2" fill="#d41fe6"/><rect x="703.6" y="415.8" width="3.2" height="3.2" fill="#2b2bea"/><rect x="714.2" y="416.2" width="3.2" height="3.2" fill="#2b2bea"/><rect x="724.2" y="417.7" width="3.2" height="3.2" fill="#2b2bea"/><rect x="735.7" y="418.1" width="3.2" height="3.2" fill="#2b2bea"/><rect x="746.2" y="418.4" width="3.2" height="3.2" fill="#2b2bea"/><rect x="734.9" y="314.1" width="3.2" height="3.2" fill="#2b2bea"/><rect x="735.8" y="324.6" width="3.2" height="3.2" fill="#2b2bea"/><rect x="734.7" y="333.1" width="3.2" height="3.2" fill="#2b2bea"/><rect x="735.9" y="343.6" width="3.2" height="3.2" fill="#2b2bea"/><rect x="731.8" y="477.9" width="3.2" height="3.2" fill="#d41fe6"/><rect x="734.8" y="484.0" width="3.2" height="3.2" fill="#d41fe6"/><rect x="738.9" y="490.2" width="3.2" height="3.2" fill="#d41fe6"/><rect x="275.9" y="469.9" width="3.2" height="3.2" fill="#1fc6e6"/><rect x="284.0" y="467.8" width="3.2" height="3.2" fill="#1fc6e6"/><rect x="294.4" y="468.1" width="3.2" height="3.2" fill="#1fc6e6"/><rect x="302.6" y="465.8" width="3.2" height="3.2" fill="#1fc6e6"/><rect x="310.7" y="466.8" width="3.2" height="3.2" fill="#1fc6e6"/><rect x="319.8" y="464.0" width="3.2" height="3.2" fill="#1fc6e6"/><rect x="330.4" y="464.8" width="3.2" height="3.2" fill="#1fc6e6"/><rect x="339.9" y="463.6" width="3.2" height="3.2" fill="#1fc6e6"/><rect x="349.3" y="461.6" width="3.2" height="3.2" fill="#1fc6e6"/><rect x="356.6" y="461.9" width="3.2" height="3.2" fill="#1fc6e6"/><rect x="365.3" y="459.4" width="3.2" height="3.2" fill="#1fc6e6"/><rect x="376.2" y="461.2" width="3.2" height="3.2" fill="#1fc6e6"/><rect x="383.8" y="461.6" width="3.2" height="3.2" fill="#1fc6e6"/><rect x="393.0" y="465.3" width="3.2" height="3.2" fill="#1fc6e6"/><rect x="401.9" y="465.6" width="3.2" height="3.2" fill="#1fc6e6"/><rect x="411.9" y="469.0" width="3.2" height="3.2" fill="#1fc6e6"/><rect x="421.5" y="472.1" width="3.2" height="3.2" fill="#1fc6e6"/><rect x="430.4" y="472.3" width="3.2" height="3.2" fill="#1fc6e6"/><rect x="439.1" y="473.6" width="3.2" height="3.2" fill="#1fc6e6"/><rect x="446.7" y="475.6" width="3.2" height="3.2" fill="#1fc6e6"/><rect x="457.5" y="478.8" width="3.2" height="3.2" fill="#1fc6e6"/><rect x="464.5" y="477.5" width="3.2" height="3.2" fill="#1fc6e6"/><rect x="474.0" y="476.5" width="3.2" height="3.2" fill="#1fc6e6"/><rect x="483.2" y="475.6" width="3.2" height="3.2" fill="#1fc6e6"/><rect x="491.7" y="475.2" width="3.2" height="3.2" fill="#1fc6e6"/><rect x="502.6" y="475.2" width="3.2" height="3.2" fill="#1fc6e6"/><rect x="511.7" y="477.0" width="3.2" height="3.2" fill="#1fc6e6"/><rect x="518.7" y="479.4" width="3.2" height="3.2" fill="#1fc6e6"/><rect x="529.8" y="479.8" width="3.2" height="3.2" fill="#1fc6e6"/><rect x="536.0" y="482.9" width="3.2" height="3.2" fill="#1fc6e6"/><rect x="546.5" y="485.4" width="3.2" height="3.2" fill="#1fc6e6"/><rect x="556.6" y="488.0" width="3.2" height="3.2" fill="#1fc6e6"/><rect x="565.2" y="487.1" width="3.2" height="3.2" fill="#1fc6e6"/><rect x="573.5" y="489.3" width="3.2" height="3.2" fill="#1fc6e6"/><rect x="274.2" y="472.1" width="3.2" height="3.2" fill="#2b2bea"/><rect x="284.7" y="473.8" width="3.2" height="3.2" fill="#2b2bea"/><rect x="291.4" y="472.3" width="3.2" height="3.2" fill="#2b2bea"/><rect x="300.2" y="472.0" width="3.2" height="3.2" fill="#2b2bea"/><rect x="310.3" y="470.1" width="3.2" height="3.2" fill="#2b2bea"/><rect x="317.6" y="471.2" width="3.2" height="3.2" fill="#2b2bea"/><rect x="327.2" y="470.8" width="3.2" height="3.2" fill="#2b2bea"/><rect x="335.4" y="469.0" width="3.2" height="3.2" fill="#2b2bea"/><rect x="345.7" y="469.0" width="3.2" height="3.2" fill="#2b2bea"/><rect x="352.8" y="467.3" width="3.2" height="3.2" fill="#2b2bea"/><rect x="362.0" y="466.4" width="3.2" height="3.2" fill="#2b2bea"/><rect x="371.2" y="464.2" width="3.2" height="3.2" fill="#2b2bea"/><rect x="379.3" y="466.7" width="3.2" height="3.2" fill="#2b2bea"/><rect x="387.8" y="469.1" width="3.2" height="3.2" fill="#2b2bea"/><rect x="396.2" y="471.2" width="3.2" height="3.2" fill="#2b2bea"/><rect x="405.0" y="472.4" width="3.2" height="3.2" fill="#2b2bea"/><rect x="412.1" y="474.6" width="3.2" height="3.2" fill="#2b2bea"/><rect x="421.4" y="475.6" width="3.2" height="3.2" fill="#2b2bea"/><rect x="428.7" y="476.3" width="3.2" height="3.2" fill="#2b2bea"/><rect x="438.2" y="480.5" width="3.2" height="3.2" fill="#2b2bea"/><rect x="445.5" y="479.6" width="3.2" height="3.2" fill="#2b2bea"/><rect x="453.5" y="482.0" width="3.2" height="3.2" fill="#2b2bea"/><rect x="462.3" y="484.5" width="3.2" height="3.2" fill="#2b2bea"/><rect x="470.2" y="481.7" width="3.2" height="3.2" fill="#2b2bea"/><rect x="479.0" y="481.8" width="3.2" height="3.2" fill="#2b2bea"/><rect x="489.5" y="479.5" width="3.2" height="3.2" fill="#2b2bea"/><rect x="496.0" y="479.4" width="3.2" height="3.2" fill="#2b2bea"/><rect x="506.0" y="482.1" width="3.2" height="3.2" fill="#2b2bea"/><rect x="512.9" y="481.4" width="3.2" height="3.2" fill="#2b2bea"/><rect x="521.8" y="483.4" width="3.2" height="3.2" fill="#2b2bea"/><rect x="530.4" y="486.8" width="3.2" height="3.2" fill="#2b2bea"/><rect x="539.8" y="487.5" width="3.2" height="3.2" fill="#2b2bea"/><rect x="546.9" y="489.9" width="3.2" height="3.2" fill="#2b2bea"/><rect x="555.2" y="493.6" width="3.2" height="3.2" fill="#2b2bea"/><rect x="564.2" y="493.5" width="3.2" height="3.2" fill="#2b2bea"/><rect x="574.4" y="493.3" width="3.2" height="3.2" fill="#2b2bea"/><rect x="274.7" y="479.6" width="3.2" height="3.2" fill="#d41fe6"/><rect x="285.8" y="477.1" width="3.2" height="3.2" fill="#d41fe6"/><rect x="293.8" y="478.2" width="3.2" height="3.2" fill="#d41fe6"/><rect x="302.7" y="475.3" width="3.2" height="3.2" fill="#d41fe6"/><rect x="310.6" y="477.1" width="3.2" height="3.2" fill="#d41fe6"/><rect x="322.0" y="474.9" width="3.2" height="3.2" fill="#d41fe6"/><rect x="330.3" y="474.9" width="3.2" height="3.2" fill="#d41fe6"/><rect x="338.7" y="475.7" width="3.2" height="3.2" fill="#d41fe6"/><rect x="348.9" y="472.0" width="3.2" height="3.2" fill="#d41fe6"/><rect x="356.0" y="471.3" width="3.2" height="3.2" fill="#d41fe6"/><rect x="366.2" y="470.9" width="3.2" height="3.2" fill="#d41fe6"/><rect x="376.2" y="470.9" width="3.2" height="3.2" fill="#d41fe6"/><rect x="383.4" y="471.6" width="3.2" height="3.2" fill="#d41fe6"/><rect x="392.9" y="473.9" width="3.2" height="3.2" fill="#d41fe6"/><rect x="403.4" y="476.8" width="3.2" height="3.2" fill="#d41fe6"/><rect x="411.7" y="480.2" width="3.2" height="3.2" fill="#d41fe6"/><rect x="419.5" y="480.8" width="3.2" height="3.2" fill="#d41fe6"/><rect x="428.2" y="483.3" width="3.2" height="3.2" fill="#d41fe6"/><rect x="436.7" y="485.1" width="3.2" height="3.2" fill="#d41fe6"/><rect x="448.2" y="486.9" width="3.2" height="3.2" fill="#d41fe6"/><rect x="455.0" y="486.9" width="3.2" height="3.2" fill="#d41fe6"/><rect x="465.9" y="486.7" width="3.2" height="3.2" fill="#d41fe6"/><rect x="474.3" y="486.8" width="3.2" height="3.2" fill="#d41fe6"/><rect x="484.9" y="486.2" width="3.2" height="3.2" fill="#d41fe6"/><rect x="493.7" y="484.4" width="3.2" height="3.2" fill="#d41fe6"/><rect x="502.5" y="484.8" width="3.2" height="3.2" fill="#d41fe6"/><rect x="511.9" y="485.6" width="3.2" height="3.2" fill="#d41fe6"/><rect x="520.6" y="487.8" width="3.2" height="3.2" fill="#d41fe6"/><rect x="528.8" y="490.5" width="3.2" height="3.2" fill="#d41fe6"/><rect x="536.5" y="493.8" width="3.2" height="3.2" fill="#d41fe6"/><rect x="545.8" y="494.6" width="3.2" height="3.2" fill="#d41fe6"/><rect x="553.9" y="497.0" width="3.2" height="3.2" fill="#d41fe6"/><rect x="564.1" y="499.0" width="3.2" height="3.2" fill="#d41fe6"/><rect x="573.0" y="499.0" width="3.2" height="3.2" fill="#d41fe6"/><rect x="452.0" y="503.3" width="3.2" height="3.2" fill="#2b2bea"/><rect x="453.4" y="508.9" width="3.2" height="3.2" fill="#2b2bea"/><rect x="454.7" y="513.6" width="3.2" height="3.2" fill="#2b2bea"/><rect x="525.4" y="462.4" width="3.2" height="3.2" fill="#1fc6e6"/><rect x="531.4" y="460.4" width="3.2" height="3.2" fill="#1fc6e6"/><rect x="538.4" y="466.4" width="3.2" height="3.2" fill="#1fc6e6"/><rect x="526.4" y="468.4" width="3.2" height="3.2" fill="#1fc6e6"/><rect x="365.6" y="520.2" width="3.2" height="3.2" fill="#1fc6e6"/><rect x="366.3" y="527.2" width="3.2" height="3.2" fill="#1fc6e6"/><rect x="365.7" y="534.7" width="3.2" height="3.2" fill="#1fc6e6"/><rect x="364.4" y="542.8" width="3.2" height="3.2" fill="#1fc6e6"/><rect x="365.3" y="548.7" width="3.2" height="3.2" fill="#1fc6e6"/><rect x="364.6" y="556.1" width="3.2" height="3.2" fill="#1fc6e6"/><rect x="640.2" y="518.5" width="3.2" height="3.2" fill="#1fc6e6"/><rect x="640.7" y="528.1" width="3.2" height="3.2" fill="#1fc6e6"/><rect x="641.4" y="538.7" width="3.2" height="3.2" fill="#1fc6e6"/><rect x="641.8" y="547.9" width="3.2" height="3.2" fill="#1fc6e6"/><rect x="643.2" y="558.1" width="3.2" height="3.2" fill="#1fc6e6"/><rect x="644.1" y="568.5" width="3.2" height="3.2" fill="#1fc6e6"/><rect x="649.7" y="498.2" width="3.2" height="3.2" fill="#d41fe6"/><rect x="649.8" y="506.9" width="3.2" height="3.2" fill="#d41fe6"/><rect x="649.0" y="515.9" width="3.2" height="3.2" fill="#d41fe6"/><rect x="649.6" y="525.6" width="3.2" height="3.2" fill="#d41fe6"/><rect x="649.0" y="534.3" width="3.2" height="3.2" fill="#d41fe6"/><rect x="649.8" y="543.5" width="3.2" height="3.2" fill="#d41fe6"/><rect x="648.9" y="552.1" width="3.2" height="3.2" fill="#d41fe6"/><rect x="649.0" y="560.9" width="3.2" height="3.2" fill="#d41fe6"/><rect x="649.3" y="569.9" width="3.2" height="3.2" fill="#d41fe6"/><rect x="653.9" y="503.3" width="3.2" height="3.2" fill="#2b2bea"/><rect x="653.4" y="512.9" width="3.2" height="3.2" fill="#2b2bea"/><rect x="653.7" y="522.4" width="3.2" height="3.2" fill="#2b2bea"/><rect x="653.3" y="531.1" width="3.2" height="3.2" fill="#2b2bea"/><rect x="653.3" y="540.0" width="3.2" height="3.2" fill="#2b2bea"/><rect x="653.3" y="550.1" width="3.2" height="3.2" fill="#2b2bea"/><rect x="654.0" y="559.5" width="3.2" height="3.2" fill="#2b2bea"/><rect x="653.6" y="568.5" width="3.2" height="3.2" fill="#2b2bea"/><rect x="614.9" y="526.2" width="3.2" height="3.2" fill="#1fc6e6"/><rect x="626.7" y="526.6" width="3.2" height="3.2" fill="#1fc6e6"/><rect x="638.0" y="526.3" width="3.2" height="3.2" fill="#1fc6e6"/><rect x="621.4" y="498.6" width="3.2" height="3.2" fill="#2b2bea"/><rect x="624.1" y="493.5" width="3.2" height="3.2" fill="#2b2bea"/><rect x="626.2" y="488.6" width="3.2" height="3.2" fill="#2b2bea"/><rect x="619.6" y="501.4" width="3.2" height="3.2" fill="#d41fe6"/><rect x="624.3" y="491.4" width="3.2" height="3.2" fill="#d41fe6"/><rect x="630.2" y="498.5" width="3.2" height="3.2" fill="#2b2bea"/><rect x="633.2" y="493.4" width="3.2" height="3.2" fill="#2b2bea"/><rect x="635.5" y="488.6" width="3.2" height="3.2" fill="#2b2bea"/><rect x="628.2" y="501.7" width="3.2" height="3.2" fill="#d41fe6"/><rect x="633.5" y="491.2" width="3.2" height="3.2" fill="#d41fe6"/><rect x="639.1" y="498.2" width="3.2" height="3.2" fill="#2b2bea"/><rect x="641.9" y="493.5" width="3.2" height="3.2" fill="#2b2bea"/><rect x="644.3" y="488.7" width="3.2" height="3.2" fill="#2b2bea"/><rect x="637.3" y="501.4" width="3.2" height="3.2" fill="#d41fe6"/><rect x="642.2" y="491.7" width="3.2" height="3.2" fill="#d41fe6"/><rect x="727.8" y="479.0" width="3.2" height="3.2" fill="#2b2bea"/><rect x="735.1" y="482.5" width="3.2" height="3.2" fill="#2b2bea"/><rect x="741.8" y="486.0" width="3.2" height="3.2" fill="#2b2bea"/><rect x="749.1" y="491.2" width="3.2" height="3.2" fill="#2b2bea"/><rect x="279.0" y="573.6" width="3.2" height="3.2" fill="#1fc6e6"/><rect x="287.1" y="574.0" width="3.2" height="3.2" fill="#1fc6e6"/><rect x="297.0" y="574.2" width="3.2" height="3.2" fill="#1fc6e6"/><rect x="306.4" y="573.5" width="3.2" height="3.2" fill="#1fc6e6"/><rect x="317.1" y="572.8" width="3.2" height="3.2" fill="#1fc6e6"/><rect x="380.4" y="571.9" width="3.2" height="3.2" fill="#1fc6e6"/><rect x="377.4" y="577.0" width="3.2" height="3.2" fill="#2b2bea"/><rect x="374.4" y="582.9" width="3.2" height="3.2" fill="#2b2bea"/><rect x="392.4" y="571.6" width="3.2" height="3.2" fill="#1fc6e6"/><rect x="389.4" y="577.9" width="3.2" height="3.2" fill="#2b2bea"/><rect x="386.4" y="583.8" width="3.2" height="3.2" fill="#d41fe6"/><rect x="404.4" y="572.1" width="3.2" height="3.2" fill="#1fc6e6"/><rect x="401.4" y="577.2" width="3.2" height="3.2" fill="#2b2bea"/><rect x="398.4" y="583.6" width="3.2" height="3.2" fill="#d41fe6"/><rect x="416.4" y="572.1" width="3.2" height="3.2" fill="#1fc6e6"/><rect x="413.4" y="577.3" width="3.2" height="3.2" fill="#2b2bea"/><rect x="410.4" y="583.5" width="3.2" height="3.2" fill="#2b2bea"/><rect x="428.4" y="572.2" width="3.2" height="3.2" fill="#1fc6e6"/><rect x="425.4" y="576.9" width="3.2" height="3.2" fill="#2b2bea"/><rect x="422.4" y="583.1" width="3.2" height="3.2" fill="#d41fe6"/><rect x="440.4" y="571.9" width="3.2" height="3.2" fill="#1fc6e6"/><rect x="437.4" y="577.0" width="3.2" height="3.2" fill="#2b2bea"/><rect x="434.4" y="583.3" width="3.2" height="3.2" fill="#d41fe6"/><rect x="452.4" y="572.0" width="3.2" height="3.2" fill="#1fc6e6"/><rect x="449.4" y="577.1" width="3.2" height="3.2" fill="#2b2bea"/><rect x="446.4" y="583.4" width="3.2" height="3.2" fill="#2b2bea"/><rect x="464.4" y="571.7" width="3.2" height="3.2" fill="#1fc6e6"/><rect x="461.4" y="577.5" width="3.2" height="3.2" fill="#2b2bea"/><rect x="458.4" y="583.2" width="3.2" height="3.2" fill="#d41fe6"/><rect x="476.4" y="572.0" width="3.2" height="3.2" fill="#1fc6e6"/><rect x="473.4" y="576.9" width="3.2" height="3.2" fill="#2b2bea"/><rect x="470.4" y="583.6" width="3.2" height="3.2" fill="#d41fe6"/><rect x="488.4" y="571.5" width="3.2" height="3.2" fill="#1fc6e6"/><rect x="485.4" y="577.9" width="3.2" height="3.2" fill="#2b2bea"/><rect x="482.4" y="583.5" width="3.2" height="3.2" fill="#2b2bea"/><rect x="500.4" y="571.9" width="3.2" height="3.2" fill="#1fc6e6"/><rect x="497.4" y="577.3" width="3.2" height="3.2" fill="#2b2bea"/><rect x="494.4" y="583.5" width="3.2" height="3.2" fill="#d41fe6"/><rect x="512.4" y="572.1" width="3.2" height="3.2" fill="#1fc6e6"/><rect x="509.4" y="577.7" width="3.2" height="3.2" fill="#2b2bea"/><rect x="506.4" y="583.7" width="3.2" height="3.2" fill="#d41fe6"/><rect x="524.4" y="571.9" width="3.2" height="3.2" fill="#1fc6e6"/><rect x="521.4" y="577.9" width="3.2" height="3.2" fill="#2b2bea"/><rect x="518.4" y="583.7" width="3.2" height="3.2" fill="#2b2bea"/><rect x="536.4" y="572.3" width="3.2" height="3.2" fill="#1fc6e6"/><rect x="533.4" y="577.3" width="3.2" height="3.2" fill="#2b2bea"/><rect x="530.4" y="583.3" width="3.2" height="3.2" fill="#d41fe6"/><rect x="548.4" y="572.0" width="3.2" height="3.2" fill="#1fc6e6"/><rect x="545.4" y="577.8" width="3.2" height="3.2" fill="#2b2bea"/><rect x="542.4" y="583.4" width="3.2" height="3.2" fill="#d41fe6"/><rect x="560.4" y="571.9" width="3.2" height="3.2" fill="#1fc6e6"/><rect x="557.4" y="577.3" width="3.2" height="3.2" fill="#2b2bea"/><rect x="554.4" y="583.8" width="3.2" height="3.2" fill="#2b2bea"/><rect x="572.4" y="571.7" width="3.2" height="3.2" fill="#1fc6e6"/><rect x="569.4" y="577.0" width="3.2" height="3.2" fill="#2b2bea"/><rect x="566.4" y="583.6" width="3.2" height="3.2" fill="#d41fe6"/><rect x="584.4" y="572.3" width="3.2" height="3.2" fill="#1fc6e6"/><rect x="581.4" y="577.6" width="3.2" height="3.2" fill="#2b2bea"/><rect x="578.4" y="583.5" width="3.2" height="3.2" fill="#d41fe6"/><rect x="596.4" y="572.2" width="3.2" height="3.2" fill="#1fc6e6"/><rect x="593.4" y="577.2" width="3.2" height="3.2" fill="#2b2bea"/><rect x="590.4" y="583.5" width="3.2" height="3.2" fill="#2b2bea"/><rect x="608.4" y="571.5" width="3.2" height="3.2" fill="#1fc6e6"/><rect x="605.4" y="577.0" width="3.2" height="3.2" fill="#2b2bea"/><rect x="602.4" y="583.3" width="3.2" height="3.2" fill="#d41fe6"/><rect x="620.4" y="571.9" width="3.2" height="3.2" fill="#1fc6e6"/><rect x="617.4" y="577.3" width="3.2" height="3.2" fill="#2b2bea"/><rect x="614.4" y="583.0" width="3.2" height="3.2" fill="#d41fe6"/><rect x="632.4" y="572.1" width="3.2" height="3.2" fill="#1fc6e6"/><rect x="629.4" y="577.4" width="3.2" height="3.2" fill="#2b2bea"/><rect x="626.4" y="583.1" width="3.2" height="3.2" fill="#2b2bea"/><rect x="644.4" y="571.7" width="3.2" height="3.2" fill="#1fc6e6"/><rect x="641.4" y="577.3" width="3.2" height="3.2" fill="#2b2bea"/><rect x="638.4" y="583.1" width="3.2" height="3.2" fill="#d41fe6"/><rect x="656.4" y="571.5" width="3.2" height="3.2" fill="#1fc6e6"/><rect x="653.4" y="577.8" width="3.2" height="3.2" fill="#2b2bea"/><rect x="650.4" y="583.9" width="3.2" height="3.2" fill="#d41fe6"/><rect x="668.4" y="572.1" width="3.2" height="3.2" fill="#1fc6e6"/><rect x="665.4" y="577.8" width="3.2" height="3.2" fill="#2b2bea"/><rect x="662.4" y="583.3" width="3.2" height="3.2" fill="#2b2bea"/><rect x="680.4" y="572.2" width="3.2" height="3.2" fill="#1fc6e6"/><rect x="677.4" y="577.1" width="3.2" height="3.2" fill="#2b2bea"/><rect x="674.4" y="583.6" width="3.2" height="3.2" fill="#d41fe6"/><rect x="692.4" y="572.0" width="3.2" height="3.2" fill="#1fc6e6"/><rect x="689.4" y="577.8" width="3.2" height="3.2" fill="#2b2bea"/><rect x="686.4" y="583.0" width="3.2" height="3.2" fill="#d41fe6"/><rect x="704.4" y="572.2" width="3.2" height="3.2" fill="#1fc6e6"/><rect x="701.4" y="577.0" width="3.2" height="3.2" fill="#2b2bea"/><rect x="698.4" y="583.4" width="3.2" height="3.2" fill="#2b2bea"/><rect x="716.4" y="572.4" width="3.2" height="3.2" fill="#1fc6e6"/><rect x="713.4" y="576.9" width="3.2" height="3.2" fill="#2b2bea"/><rect x="710.4" y="583.1" width="3.2" height="3.2" fill="#d41fe6"/><rect x="728.4" y="571.7" width="3.2" height="3.2" fill="#1fc6e6"/><rect x="725.4" y="577.2" width="3.2" height="3.2" fill="#2b2bea"/><rect x="722.4" y="583.0" width="3.2" height="3.2" fill="#d41fe6"/><rect x="740.4" y="572.3" width="3.2" height="3.2" fill="#1fc6e6"/><rect x="737.4" y="577.7" width="3.2" height="3.2" fill="#2b2bea"/><rect x="734.4" y="583.3" width="3.2" height="3.2" fill="#2b2bea"/><rect x="752.4" y="571.8" width="3.2" height="3.2" fill="#1fc6e6"/><rect x="749.4" y="577.5" width="3.2" height="3.2" fill="#2b2bea"/><rect x="746.4" y="582.9" width="3.2" height="3.2" fill="#d41fe6"/>
<rect x="635.3" y="567.7" width="1.6" height="1.6" fill="#151515"/><rect x="753.8" y="538.3" width="1.6" height="1.6" fill="#151515"/><rect x="498.8" y="278.3" width="1.6" height="1.6" fill="#151515"/><rect x="712.1" y="556.8" width="1.6" height="1.6" fill="#151515"/><rect x="350.5" y="465.5" width="1.6" height="1.6" fill="#151515"/><rect x="283.3" y="558.5" width="1.6" height="1.6" fill="#151515"/><rect x="710.7" y="276.0" width="1.6" height="1.6" fill="#151515"/><rect x="654.7" y="267.8" width="1.6" height="1.6" fill="#151515"/><rect x="338.2" y="555.0" width="1.6" height="1.6" fill="#151515"/><rect x="745.4" y="340.3" width="1.6" height="1.6" fill="#151515"/><rect x="756.0" y="361.0" width="1.6" height="1.6" fill="#151515"/><rect x="750.6" y="469.8" width="1.6" height="1.6" fill="#151515"/><rect x="722.3" y="275.0" width="1.6" height="1.6" fill="#151515"/><rect x="756.3" y="363.7" width="1.6" height="1.6" fill="#151515"/><rect x="326.5" y="460.3" width="1.6" height="1.6" fill="#151515"/><rect x="421.6" y="273.8" width="1.6" height="1.6" fill="#151515"/><rect x="598.6" y="270.4" width="1.6" height="1.6" fill="#151515"/><rect x="520.9" y="473.7" width="1.6" height="1.6" fill="#151515"/><rect x="420.4" y="477.7" width="1.6" height="1.6" fill="#151515"/><rect x="738.3" y="266.3" width="1.6" height="1.6" fill="#151515"/><rect x="339.8" y="283.9" width="1.6" height="1.6" fill="#151515"/><rect x="333.1" y="341.6" width="1.6" height="1.6" fill="#151515"/><rect x="302.0" y="268.4" width="1.6" height="1.6" fill="#151515"/><rect x="745.1" y="491.6" width="1.6" height="1.6" fill="#151515"/><rect x="757.1" y="376.4" width="1.6" height="1.6" fill="#151515"/><rect x="433.4" y="480.9" width="1.6" height="1.6" fill="#151515"/><rect x="631.7" y="276.4" width="1.6" height="1.6" fill="#151515"/><rect x="742.6" y="544.8" width="1.6" height="1.6" fill="#151515"/><rect x="440.1" y="273.9" width="1.6" height="1.6" fill="#151515"/><rect x="747.4" y="538.8" width="1.6" height="1.6" fill="#151515"/><rect x="427.9" y="560.1" width="1.6" height="1.6" fill="#151515"/><rect x="316.8" y="267.9" width="1.6" height="1.6" fill="#151515"/><rect x="342.0" y="298.6" width="1.6" height="1.6" fill="#151515"/><rect x="743.7" y="272.9" width="1.6" height="1.6" fill="#151515"/><rect x="347.7" y="466.7" width="1.6" height="1.6" fill="#151515"/><rect x="749.3" y="398.1" width="1.6" height="1.6" fill="#151515"/><rect x="710.6" y="266.4" width="1.6" height="1.6" fill="#151515"/><rect x="526.9" y="467.4" width="1.6" height="1.6" fill="#151515"/><rect x="341.3" y="346.9" width="1.6" height="1.6" fill="#151515"/><rect x="329.5" y="326.8" width="1.6" height="1.6" fill="#151515"/><rect x="677.0" y="269.8" width="1.6" height="1.6" fill="#151515"/><rect x="574.8" y="486.3" width="1.6" height="1.6" fill="#151515"/><rect x="749.3" y="416.7" width="1.6" height="1.6" fill="#151515"/><rect x="334.7" y="312.0" width="1.6" height="1.6" fill="#151515"/><rect x="320.7" y="464.8" width="1.6" height="1.6" fill="#151515"/><rect x="757.4" y="455.6" width="1.6" height="1.6" fill="#151515"/><rect x="377.9" y="456.1" width="1.6" height="1.6" fill="#151515"/><rect x="647.5" y="277.3" width="1.6" height="1.6" fill="#151515"/><rect x="511.2" y="478.9" width="1.6" height="1.6" fill="#151515"/><rect x="337.3" y="360.2" width="1.6" height="1.6" fill="#151515"/><rect x="486.9" y="472.1" width="1.6" height="1.6" fill="#151515"/><rect x="506.4" y="477.4" width="1.6" height="1.6" fill="#151515"/><rect x="724.4" y="274.4" width="1.6" height="1.6" fill="#151515"/><rect x="282.6" y="563.8" width="1.6" height="1.6" fill="#151515"/><rect x="595.7" y="272.0" width="1.6" height="1.6" fill="#151515"/><rect x="752.4" y="503.3" width="1.6" height="1.6" fill="#151515"/><rect x="468.9" y="483.2" width="1.6" height="1.6" fill="#151515"/><rect x="747.6" y="516.0" width="1.6" height="1.6" fill="#151515"/><rect x="753.0" y="553.3" width="1.6" height="1.6" fill="#151515"/><rect x="750.3" y="428.2" width="1.6" height="1.6" fill="#151515"/><rect x="673.2" y="278.2" width="1.6" height="1.6" fill="#151515"/><rect x="483.0" y="480.6" width="1.6" height="1.6" fill="#151515"/><rect x="330.4" y="362.4" width="1.6" height="1.6" fill="#151515"/><rect x="598.5" y="561.7" width="1.6" height="1.6" fill="#151515"/><rect x="651.2" y="565.2" width="1.6" height="1.6" fill="#151515"/><rect x="328.4" y="298.5" width="1.6" height="1.6" fill="#151515"/><rect x="470.7" y="473.6" width="1.6" height="1.6" fill="#151515"/><rect x="336.8" y="286.3" width="1.6" height="1.6" fill="#151515"/><rect x="344.4" y="457.4" width="1.6" height="1.6" fill="#151515"/><rect x="429.2" y="268.4" width="1.6" height="1.6" fill="#151515"/><rect x="296.8" y="272.0" width="1.6" height="1.6" fill="#151515"/><rect x="459.3" y="481.2" width="1.6" height="1.6" fill="#151515"/><rect x="704.5" y="266.0" width="1.6" height="1.6" fill="#151515"/><rect x="360.0" y="461.9" width="1.6" height="1.6" fill="#151515"/><rect x="670.7" y="270.9" width="1.6" height="1.6" fill="#151515"/><rect x="568.4" y="267.2" width="1.6" height="1.6" fill="#151515"/><rect x="440.9" y="564.3" width="1.6" height="1.6" fill="#151515"/><rect x="755.1" y="397.3" width="1.6" height="1.6" fill="#151515"/><rect x="752.3" y="383.4" width="1.6" height="1.6" fill="#151515"/><rect x="560.1" y="273.3" width="1.6" height="1.6" fill="#151515"/><rect x="757.5" y="450.4" width="1.6" height="1.6" fill="#151515"/><rect x="543.3" y="465.6" width="1.6" height="1.6" fill="#151515"/><rect x="545.9" y="274.0" width="1.6" height="1.6" fill="#151515"/><rect x="575.8" y="277.6" width="1.6" height="1.6" fill="#151515"/><rect x="405.6" y="465.5" width="1.6" height="1.6" fill="#151515"/><rect x="737.1" y="270.9" width="1.6" height="1.6" fill="#151515"/><rect x="756.6" y="446.8" width="1.6" height="1.6" fill="#151515"/><rect x="741.1" y="272.5" width="1.6" height="1.6" fill="#151515"/><rect x="372.1" y="470.7" width="1.6" height="1.6" fill="#151515"/><rect x="362.3" y="462.8" width="1.6" height="1.6" fill="#151515"/><rect x="572.2" y="271.8" width="1.6" height="1.6" fill="#151515"/><rect x="647.4" y="276.7" width="1.6" height="1.6" fill="#151515"/><rect x="530.3" y="269.6" width="1.6" height="1.6" fill="#151515"/><rect x="754.5" y="348.8" width="1.6" height="1.6" fill="#151515"/><rect x="352.7" y="278.9" width="1.6" height="1.6" fill="#151515"/><rect x="565.8" y="272.2" width="1.6" height="1.6" fill="#151515"/><rect x="568.7" y="566.9" width="1.6" height="1.6" fill="#151515"/><rect x="637.4" y="269.9" width="1.6" height="1.6" fill="#151515"/><rect x="439.3" y="559.7" width="1.6" height="1.6" fill="#151515"/><rect x="501.3" y="560.8" width="1.6" height="1.6" fill="#151515"/><rect x="336.3" y="285.8" width="1.6" height="1.6" fill="#151515"/><rect x="494.1" y="277.9" width="1.6" height="1.6" fill="#151515"/><rect x="750.7" y="284.1" width="1.6" height="1.6" fill="#151515"/><rect x="334.0" y="341.3" width="1.6" height="1.6" fill="#151515"/><rect x="336.9" y="331.6" width="1.6" height="1.6" fill="#151515"/><rect x="748.2" y="389.7" width="1.6" height="1.6" fill="#151515"/><rect x="745.1" y="363.0" width="1.6" height="1.6" fill="#151515"/><rect x="743.1" y="514.2" width="1.6" height="1.6" fill="#151515"/><rect x="334.1" y="311.5" width="1.6" height="1.6" fill="#151515"/><rect x="340.7" y="296.7" width="1.6" height="1.6" fill="#151515"/><rect x="440.6" y="476.9" width="1.6" height="1.6" fill="#151515"/><rect x="322.8" y="468.4" width="1.6" height="1.6" fill="#151515"/><rect x="743.1" y="344.4" width="1.6" height="1.6" fill="#151515"/><rect x="754.7" y="465.8" width="1.6" height="1.6" fill="#151515"/><rect x="619.6" y="278.7" width="1.6" height="1.6" fill="#151515"/><rect x="753.2" y="293.7" width="1.6" height="1.6" fill="#151515"/><rect x="745.5" y="460.8" width="1.6" height="1.6" fill="#151515"/><rect x="753.4" y="317.7" width="1.6" height="1.6" fill="#151515"/><rect x="711.5" y="267.9" width="1.6" height="1.6" fill="#151515"/><rect x="476.9" y="557.6" width="1.6" height="1.6" fill="#151515"/><rect x="298.0" y="556.7" width="1.6" height="1.6" fill="#151515"/><rect x="298.5" y="460.0" width="1.6" height="1.6" fill="#151515"/><rect x="635.5" y="569.1" width="1.6" height="1.6" fill="#151515"/><rect x="482.9" y="270.1" width="1.6" height="1.6" fill="#151515"/><rect x="513.5" y="570.0" width="1.6" height="1.6" fill="#151515"/><rect x="293.6" y="471.3" width="1.6" height="1.6" fill="#151515"/><rect x="576.7" y="272.6" width="1.6" height="1.6" fill="#151515"/><rect x="750.9" y="453.8" width="1.6" height="1.6" fill="#151515"/><rect x="539.3" y="269.3" width="1.6" height="1.6" fill="#151515"/><rect x="335.2" y="295.8" width="1.6" height="1.6" fill="#151515"/><rect x="454.5" y="275.6" width="1.6" height="1.6" fill="#151515"/><rect x="615.2" y="274.5" width="1.6" height="1.6" fill="#151515"/><rect x="593.9" y="267.2" width="1.6" height="1.6" fill="#151515"/><rect x="559.2" y="269.1" width="1.6" height="1.6" fill="#151515"/><rect x="749.7" y="370.5" width="1.6" height="1.6" fill="#151515"/><rect x="328.4" y="356.7" width="1.6" height="1.6" fill="#151515"/><rect x="350.9" y="278.4" width="1.6" height="1.6" fill="#151515"/><rect x="331.1" y="294.0" width="1.6" height="1.6" fill="#151515"/><rect x="752.6" y="509.8" width="1.6" height="1.6" fill="#151515"/><rect x="573.7" y="270.6" width="1.6" height="1.6" fill="#151515"/><rect x="279.3" y="570.4" width="2" height="1.4" fill="#151515"/><rect x="286.5" y="569.7" width="2" height="1.4" fill="#151515"/><rect x="316.4" y="570.3" width="2" height="1.4" fill="#151515"/><rect x="322.3" y="570.6" width="2" height="1.4" fill="#151515"/><rect x="327.4" y="569.5" width="2" height="1.4" fill="#151515"/><rect x="334.2" y="570.8" width="2" height="1.4" fill="#151515"/><rect x="344.0" y="569.5" width="2" height="1.4" fill="#151515"/><rect x="351.6" y="570.4" width="2" height="1.4" fill="#151515"/><rect x="356.9" y="569.6" width="2" height="1.4" fill="#151515"/><rect x="362.6" y="570.1" width="2" height="1.4" fill="#151515"/><rect x="372.5" y="569.7" width="2" height="1.4" fill="#151515"/><rect x="377.1" y="569.7" width="2" height="1.4" fill="#151515"/><rect x="383.9" y="570.2" width="2" height="1.4" fill="#151515"/><rect x="393.7" y="570.1" width="2" height="1.4" fill="#151515"/><rect x="421.8" y="569.7" width="2" height="1.4" fill="#151515"/><rect x="434.7" y="570.6" width="2" height="1.4" fill="#151515"/><rect x="439.8" y="569.5" width="2" height="1.4" fill="#151515"/><rect x="446.3" y="570.1" width="2" height="1.4" fill="#151515"/><rect x="461.2" y="570.2" width="2" height="1.4" fill="#151515"/><rect x="469.9" y="570.6" width="2" height="1.4" fill="#151515"/><rect x="475.0" y="570.5" width="2" height="1.4" fill="#151515"/><rect x="498.9" y="569.5" width="2" height="1.4" fill="#151515"/><rect x="505.1" y="570.1" width="2" height="1.4" fill="#151515"/><rect x="511.2" y="571.0" width="2" height="1.4" fill="#151515"/><rect x="517.4" y="569.6" width="2" height="1.4" fill="#151515"/><rect x="526.6" y="570.2" width="2" height="1.4" fill="#151515"/><rect x="538.0" y="569.6" width="2" height="1.4" fill="#151515"/><rect x="544.2" y="569.9" width="2" height="1.4" fill="#151515"/><rect x="552.2" y="569.6" width="2" height="1.4" fill="#151515"/><rect x="561.9" y="569.8" width="2" height="1.4" fill="#151515"/><rect x="566.6" y="570.3" width="2" height="1.4" fill="#151515"/><rect x="573.3" y="569.7" width="2" height="1.4" fill="#151515"/><rect x="582.7" y="570.4" width="2" height="1.4" fill="#151515"/><rect x="593.1" y="570.3" width="2" height="1.4" fill="#151515"/><rect x="602.3" y="570.1" width="2" height="1.4" fill="#151515"/><rect x="629.8" y="570.7" width="2" height="1.4" fill="#151515"/><rect x="635.5" y="570.0" width="2" height="1.4" fill="#151515"/><rect x="645.1" y="570.7" width="2" height="1.4" fill="#151515"/><rect x="649.5" y="569.6" width="2" height="1.4" fill="#151515"/><rect x="656.3" y="570.1" width="2" height="1.4" fill="#151515"/><rect x="664.0" y="569.6" width="2" height="1.4" fill="#151515"/><rect x="677.8" y="569.9" width="2" height="1.4" fill="#151515"/><rect x="684.4" y="570.1" width="2" height="1.4" fill="#151515"/><rect x="694.0" y="570.3" width="2" height="1.4" fill="#151515"/><rect x="720.8" y="570.7" width="2" height="1.4" fill="#151515"/><rect x="301.2" y="268.1" width="1.8" height="1.8" fill="#151515"/><rect x="306.3" y="267.5" width="1.8" height="1.8" fill="#151515"/><rect x="316.7" y="267.9" width="1.8" height="1.8" fill="#151515"/><rect x="325.1" y="268.7" width="1.8" height="1.8" fill="#151515"/><rect x="330.2" y="267.4" width="1.8" height="1.8" fill="#151515"/><rect x="341.4" y="269.8" width="1.8" height="1.8" fill="#151515"/><rect x="355.7" y="268.1" width="1.8" height="1.8" fill="#151515"/><rect x="362.0" y="268.8" width="1.8" height="1.8" fill="#151515"/><rect x="388.1" y="267.5" width="1.8" height="1.8" fill="#151515"/><rect x="405.8" y="269.4" width="1.8" height="1.8" fill="#151515"/><rect x="411.3" y="269.7" width="1.8" height="1.8" fill="#151515"/><rect x="419.7" y="268.3" width="1.8" height="1.8" fill="#151515"/><rect x="469.3" y="268.3" width="1.8" height="1.8" fill="#151515"/><rect x="477.9" y="267.1" width="1.8" height="1.8" fill="#151515"/><rect x="493.5" y="268.2" width="1.8" height="1.8" fill="#151515"/><rect x="499.1" y="267.6" width="1.8" height="1.8" fill="#151515"/><rect x="517.0" y="267.7" width="1.8" height="1.8" fill="#151515"/><rect x="523.0" y="269.9" width="1.8" height="1.8" fill="#151515"/><rect x="554.6" y="269.5" width="1.8" height="1.8" fill="#151515"/><rect x="562.2" y="267.5" width="1.8" height="1.8" fill="#151515"/><rect x="572.9" y="269.7" width="1.8" height="1.8" fill="#151515"/><rect x="581.2" y="268.0" width="1.8" height="1.8" fill="#151515"/><rect x="618.0" y="268.5" width="1.8" height="1.8" fill="#151515"/><rect x="635.6" y="268.0" width="1.8" height="1.8" fill="#151515"/><rect x="643.2" y="268.1" width="1.8" height="1.8" fill="#151515"/><rect x="652.8" y="268.2" width="1.8" height="1.8" fill="#151515"/><rect x="716.4" y="269.0" width="1.8" height="1.8" fill="#151515"/><rect x="730.3" y="267.3" width="1.8" height="1.8" fill="#151515"/><rect x="740.3" y="269.3" width="1.8" height="1.8" fill="#151515"/>
<g fill="none" stroke="#fafafa" stroke-width="2.2" stroke-linecap="round" stroke-linejoin="round"><path d="M653,335 Q644,340 645,350 Q647,358 653,363"/><path d="M667,366 Q662,368 662,378 L661,425 Q656,440 646,458 L631,484"/><path d="M707,251 L703,263"/><path d="M747,251 L757,252 L753,262"/><path d="M759,287 L780,291 L774,316"/><path d="M689,328 L689,334"/></g>
<path d="M511.8,318 V342" stroke="#1fd01f" stroke-width="1.8"/><path d="M511,342 H536" stroke="#e01515" stroke-width="2.6"/><path d="M503,342 H512" stroke="#151515" stroke-width="2.6"/></svg>
</div>
<!-- Time panel -->
<div class="a" style="left:7px;top:614px;width:1113px;height:16px;background:#b9b8b8;border-top:1px solid #aaaaaa;border-bottom:1px solid #aaaaaa"></div>
<div class="a" style="left:10px;top:616px;width:12px;height:12px;line-height:0"><svg width="12" height="12" viewBox="0 0 12 12"><circle cx="6" cy="6" r="5" fill="#fff" stroke="#333" stroke-width="1.2"/><path d="M6 2.8 V6.2 H8.8" fill="none" stroke="#333" stroke-width="1.2"/></svg></div>
<div class="t lbl" style="left:27px;top:615.5px;font-size:11.4px">Time</div>
<div class="btn" style="left:15.5px;top:645.5px;width:59px;height:18px;padding-left:13px">Pause</div>
<div class="a" style="left:23px;top:649.5px;width:4px;height:10px;border:1px solid #a8a8a8;background:#e8e8e8"></div>
<div class="a" style="left:28px;top:649.5px;width:4px;height:10px;border:1px solid #a8a8a8;background:#e8e8e8"></div>
<div class="t lbl" style="left:86.5px;top:647.5px;font-size:11.2px">Synchronization:</div>
<div class="fld" style="left:175.5px;top:645.5px;width:88px;height:18px;background:linear-gradient(#fdfdfd,#f3f3f3)">Off</div>
<div class="a" style="left:252px;top:653px;width:0;height:0;border-left:3px solid transparent;border-right:3px solid transparent;border-top:3.5px solid #555"></div>
<div class="t lbl" style="left:276px;top:647.5px;font-size:11px">ROS Time:</div>
<div class="fld" style="left:332.5px;top:645px;width:143px;height:18px">19.63</div>
<div class="t lbl" style="left:480px;top:647.5px;font-size:10.6px">ROS Elapsed:</div>
<div class="fld" style="left:551px;top:645px;width:143px;height:18px">11.02</div>
<div class="t lbl" style="left:699px;top:647.5px;font-size:11px">Wall Time:</div>
<div class="fld" style="left:756px;top:645.5px;width:143px;height:18px">1763460523.49</div>
<div class="t lbl" style="left:903.5px;top:647.5px;font-size:11px">Wall Elapsed:</div>
<div class="fld" style="left:975.5px;top:645.5px;width:142px;height:18px">11.11</div>
<div class="btn" style="left:9px;top:681.5px;width:38px;height:18px;line-height:15px">Reset</div>
<div class="t lbl" style="left:1078px;top:679.5px;font-size:11px">31 fps</div>
<div class="a" style="left:1108px;top:615px;width:24px;height:24px;border-radius:50%;background:#3b8be0"></div>
<div class="a" style="left:1113px;top:623px;width:6px;height:6px;border-left:2px solid #fff;border-bottom:2px solid #fff;transform:rotate(45deg)"></div>
</body></html>
